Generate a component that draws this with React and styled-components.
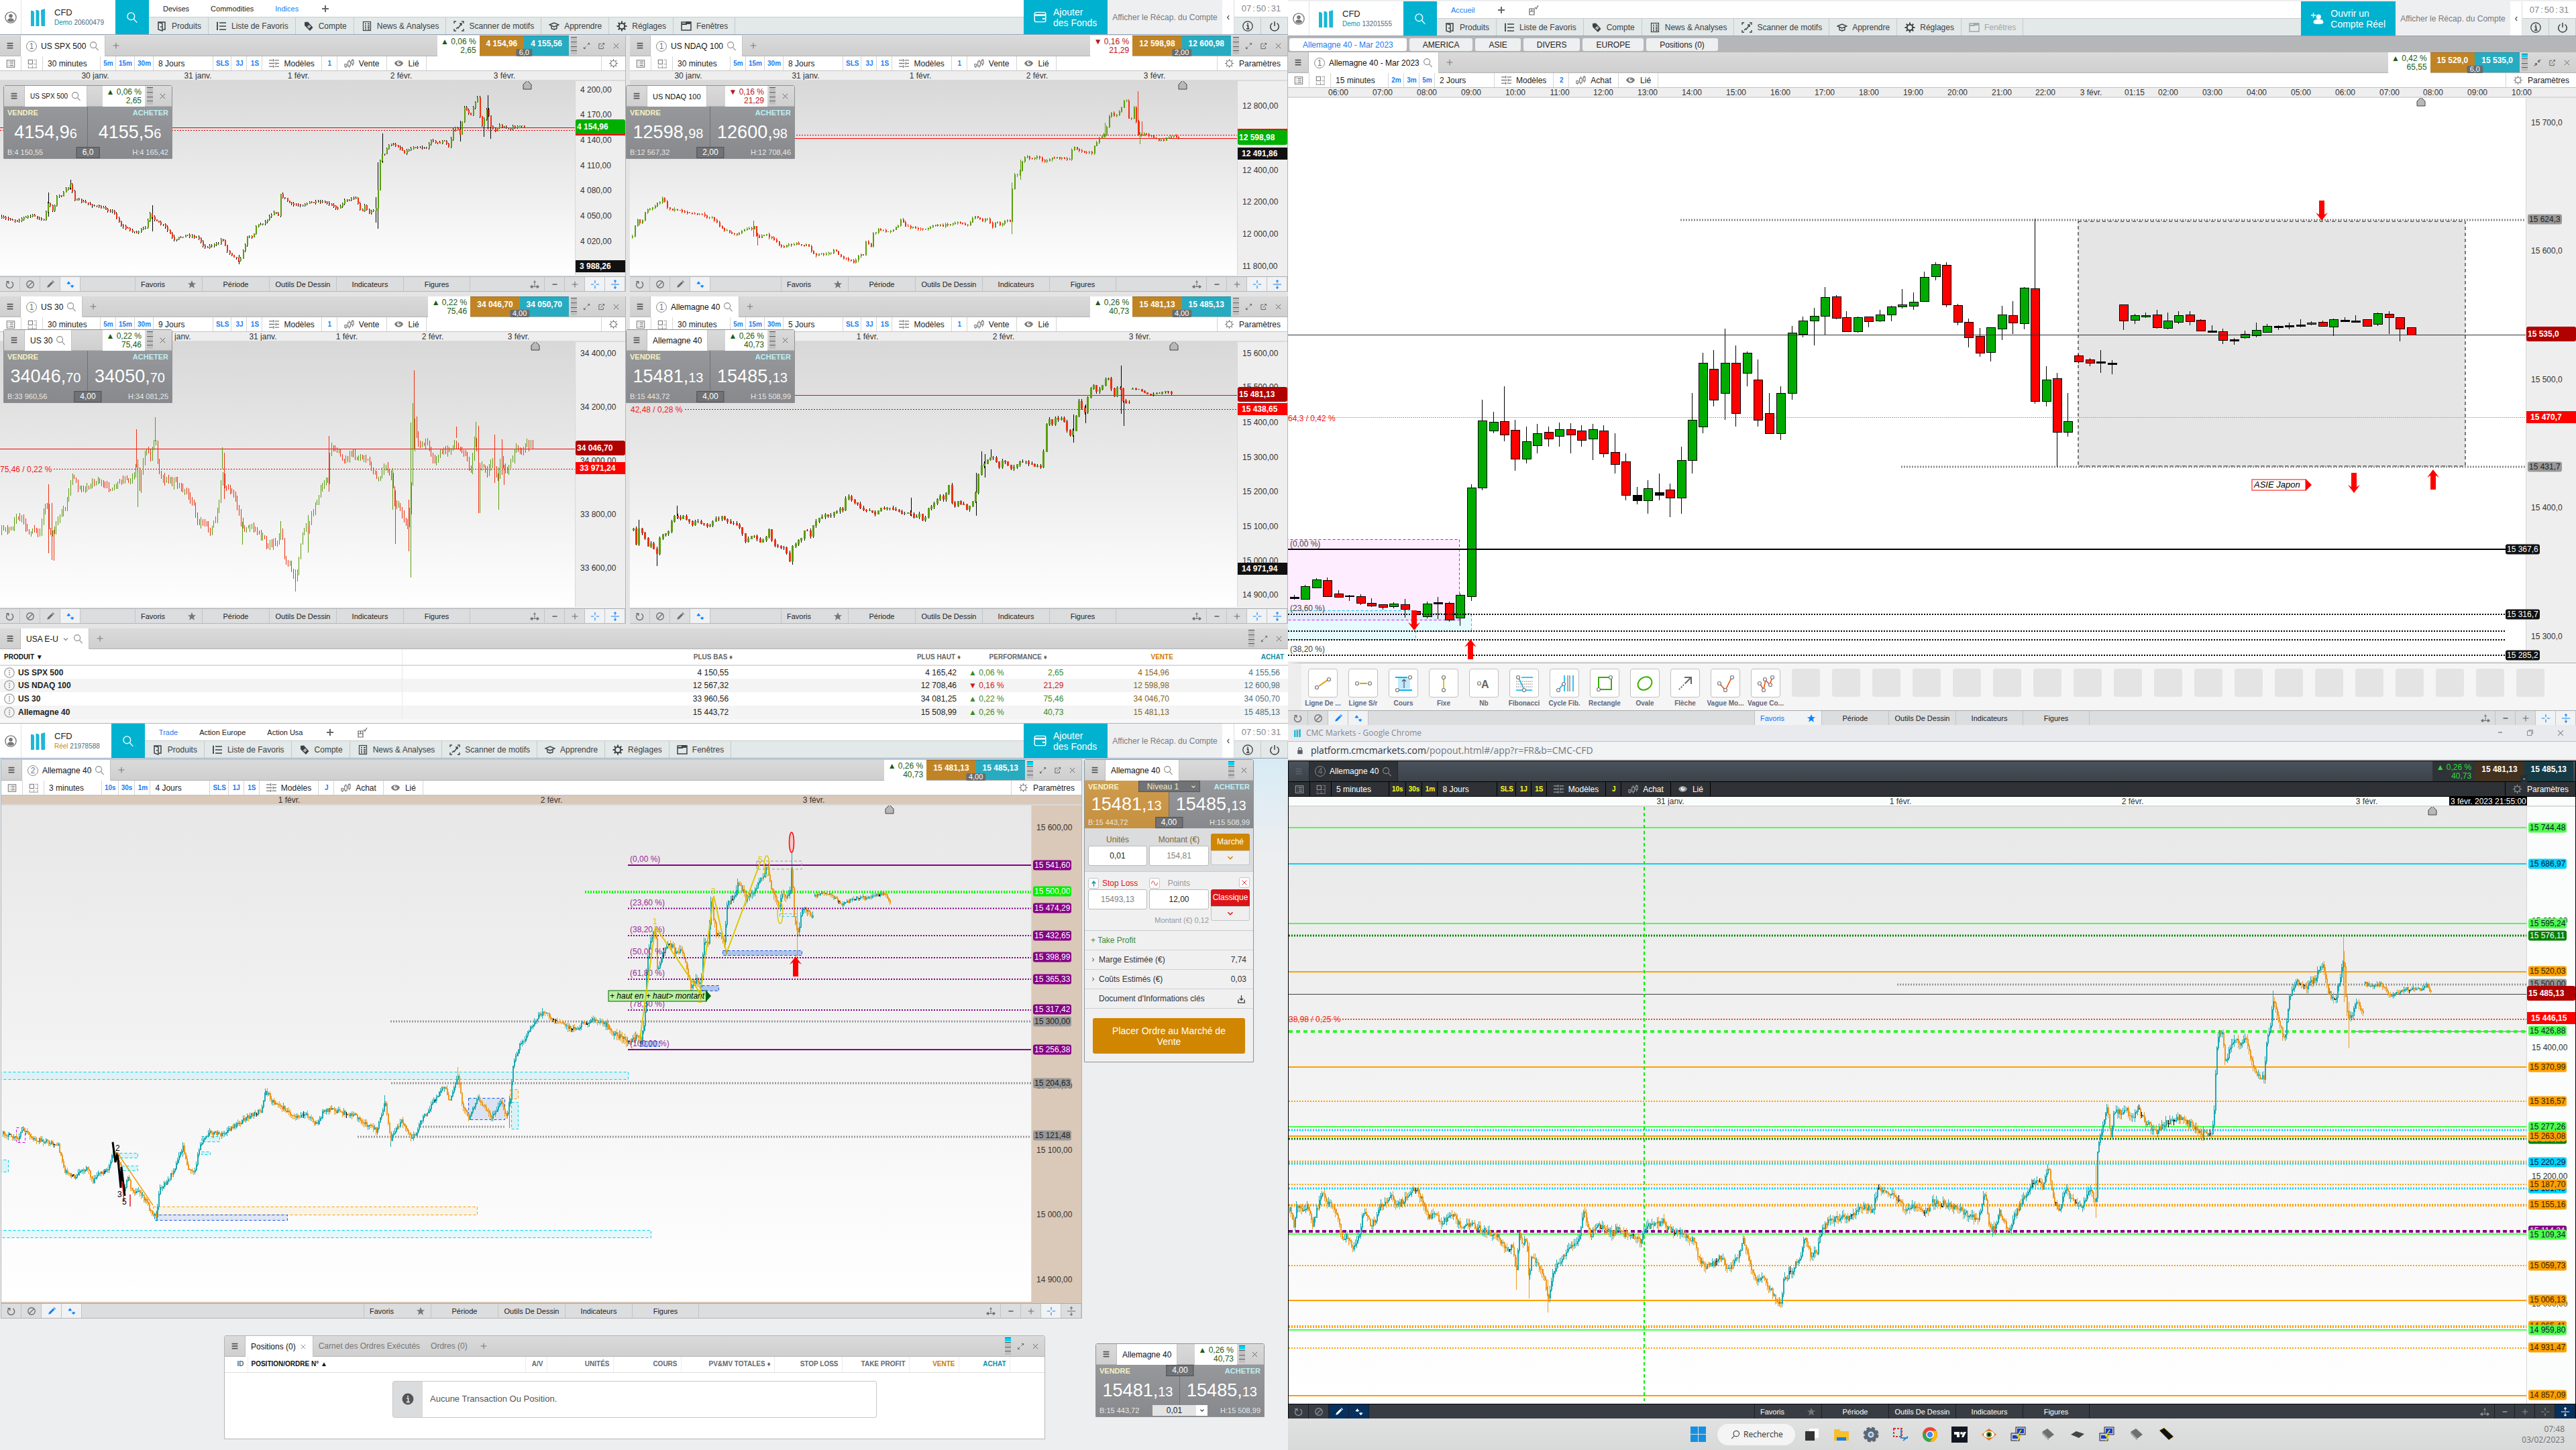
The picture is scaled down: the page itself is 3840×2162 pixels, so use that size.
import styled, { createGlobalStyle } from "styled-components";

const GlobalStyle = createGlobalStyle`
    * { box-sizing: border-box; }
    body {
        margin: 0;
        background: #eceef0;
        color: #222;
        font-family: "Liberation Sans", Arial, sans-serif;
        font-size: 12px;
        line-height: 14px;
    }
    button, input, select {
        font: inherit;
        color: inherit;
        margin: 0;
        padding: 0;
        border: 0;
        border-radius: 0;
        background: none;
    }
    svg { display: block; flex: none; }
    table { border-collapse: collapse; }
`;

/* ---------- icons, 16x16 grid ---------- */

const ICONS = {
    burger: <path d="M3 4h10M3 8h10M3 12h10" strokeWidth="2" />,
    user: <g><circle cx="8" cy="8" r="7.2" strokeWidth="1.2" /><circle cx="8" cy="6" r="2.5" fill="currentColor" stroke="none" /><path d="M3.5 12c.6-2.300 2.200-3 4.500-3s3.900.7 4.500 3a6 6 0 0 1-9 0z" fill="currentColor" stroke="none" /></g>,
    search: <g><circle cx="6.500" cy="6.500" r="4.800" /><path d="M10 10l4.500 5" /></g>,
    plus: <path d="M8 3v10M3 8h10" />,
    boldPlus: <path d="M8 3v10M3 8h10" strokeWidth="2" />,
    minus: <path d="M4 8h8" strokeWidth="2" />,
    close: <path d="M3.500 3.500l9 9M12.500 3.500l-9 9" />,
    expand: <path d="M9 7l4-4M10 3h3v3M7 9l-4 4M3 10v3h3" />,
    shrink: <path d="M14 2L9.500 6.500M9.500 3.500v3h3M2 14l4.500-4.500M3.500 9.500h3v3" strokeWidth="1.600" />,
    popout: <path d="M8 4H3.500v9h8V9M7 9.500L13 3M10 3h3v3" />,
    products: <path d="M3 2h10v11h-3M3 2l6 2v11l-6-2zM7 8v2" strokeWidth="1.500" />,
    list: <path d="M5 3h10M5 8h10M5 13h10M1 2.500h2M1 7.500h2M1 12.500h2M2 2v12" strokeWidth="1.700" />,
    tag: <g fill="currentColor" stroke="none"><path d="M2 2l5-.5L14.500 10 10 15 2 7z" /><path d="M6.500 9.500l3-3M8 11l3-3" stroke="#fff" /></g>,
    news: <g><rect x="2.500" y="1.500" width="11" height="13" /><path d="M5 4.500h2M9 4.500h3M5 7.500h2M9 7.500h3M5 10h2M9 10h3M5 12.500h2M9 12.500h3" strokeWidth="1.400" /></g>,
    scan: <path d="M1 4V1h3M12 1h3v3M15 12v3h-3M4 15H1v-3M4 12l2-2 1 1 5-7M9 4h3v3" strokeWidth="1.400" />,
    cap: <path d="M1 6l7-3 7 3-7 3zM4 7.500V11c0 2 8 2 8 0V7.500M7 13h2" strokeWidth="1.400" />,
    gear: <g><circle cx="8" cy="8" r="4.200" strokeWidth="2" /><path d="M8 .5v3M8 12.500v3M.5 8h3M12.500 8h3M2.700 2.700l2 2M11.300 11.300l2 2M13.300 2.700l-2 2M4.700 11.300l-2 2" strokeWidth="2" /></g>,
    gearThin: <g><circle cx="8" cy="8" r="4.300" /><path d="M8 1v2.700M8 12.300V15M1 8h2.700M12.300 8H15M3 3l2 2M11 11l2 2M13 3l-2 2M5 11l-2 2" /></g>,
    window: <g><rect x="1" y="2" width="14" height="12" strokeWidth="1.500" /><path d="M1 5h7V2h7M9 4h5" strokeWidth="2" /></g>,
    wallet: <g><rect x="1" y="2" width="14" height="12" rx="2" /><path d="M1 5.500h14M11 10h3" strokeWidth="2" /></g>,
    addUser: <g fill="currentColor" stroke="none"><circle cx="9.500" cy="6" r="3" /><path d="M3 13c0-3 2.500-4 6.500-4s6 1 6 4-12.500 3-12.500 0z" /><path d="M3 1v6M0 4h6" stroke="currentColor" /></g>,
    left: <path d="M10 3L6 8l4 5" strokeWidth="2" />,
    right: <path d="M5 3l4 5-4 5" strokeWidth="2" />,
    down: <path d="M4 6l4 4 4-4" strokeWidth="1.800" />,
    info: <g><circle cx="8" cy="8" r="7.200" /><path d="M6.500 7H8.500v5M6 12h4.500M8 3.500v2" strokeWidth="1.600" /></g>,
    infoSolid: <g><circle cx="8" cy="8" r="7.500" fill="currentColor" stroke="none" /><path d="M6.500 7H8.500v5M6 12h4.500M8 3.500v2" stroke="#ddd" strokeWidth="1.600" /></g>,
    power: <path d="M4.500 3.500a6.300 6.300 0 1 0 7 0M8 1v7" strokeWidth="1.400" />,
    page: <g><rect x="1.500" y="2" width="13" height="12" /><path d="M4 5h1M6.500 5h6M4 8h1M6.500 8h6M4 11h1M6.500 11h6" /></g>,
    grid: <g><rect x="1.500" y="1.500" width="7" height="7" /><path d="M11 1.500h4M11 8.500h4M1.500 11v4M8.500 11v4M15 1v14M1 15h14" strokeDasharray="1.500 1" /></g>,
    sliders: <path d="M0 3h6M9 3h7M7 1v4M0 8h9M12 8h4M11 6v4M0 13h6M9 13h7M7 11v4" strokeWidth="1.400" />,
    candles: <path d="M1 9h3v4H1zM2.500 13v2M6 5h4v7H6zM8 2v3M8 12v3M12 3h3v6h-3zM13.500 1v2M13.500 9v3" />,
    eye: <g><path d="M1 8c3-6 11-6 14 0-3 6-11 6-14 0z" fill="currentColor" stroke="none" /><circle cx="8" cy="7.500" r="3" fill="#eee" stroke="none" /><circle cx="9" cy="6.500" r="1.500" fill="currentColor" stroke="none" /></g>,
    refresh: <path d="M4.500 3.500a5.800 5.800 0 1 0 6 0M1.500 3h4v4" strokeWidth="1.600" />,
    ban: <g><circle cx="8" cy="8" r="6" strokeWidth="1.500" /><path d="M4 12l8-8" strokeWidth="1.500" /></g>,
    pencil: <path d="M2.500 13.500l1-3.500 7-7 2.500 2.500-7 7zM11 2l1-1 3 3-1 1z" fill="currentColor" stroke="none" />,
    updown: <g fill="currentColor" stroke="none"><path d="M1.500 7L5 2.500 8.500 7zM7.500 10L11 14l3.500-4z" /><path d="M4 7h2M10 9.500h2" stroke="currentColor" /></g>,
    star: <path d="M8 1l2 5h5l-4 3.200 1.500 5.300L8 11.500l-4.500 3L5 9.200 1 6h5z" fill="currentColor" stroke="none" />,
    spread: <path d="M8 1.500v5M6 4h4M1 12h14M4 9.500v5M12 9.500v5M8 7v4M3 10l-2 2 2 2M13 10l2 2-2 2" strokeWidth="1.300" />,
    cross: <path d="M8 1v5M8 10v5M1 8h5M10 8h5" strokeWidth="1.300" />,
    stretch: <path d="M8 1v5M6 3l2-2 2 2M1 8h14M8 10v5M6 13l2 2 2-2" strokeWidth="1.300" />,
    lock: <g fill="currentColor" stroke="none"><rect x="3" y="7" width="10" height="8" rx="1" /><path d="M5 7V5a3 3 0 0 1 6 0v2" fill="none" stroke="currentColor" strokeWidth="1.600" /></g>,
    download: <path d="M3 9v5h10V9M8 2v8M5 7l3 3 3-3" strokeWidth="1.300" />,
    mouse: <path d="M2 6h7v9H2zM2 10h7M5.500 6v4M10 4l2 2 3-5" />,
    upArrow: <path d="M8 14V4M4 8l4-5 4 5" strokeWidth="2" />,
    wave: <path d="M2 9c2-7 4-7 6-1s4 6 6-1" />,
    max: <path d="M3 5h8v8H3zM6 5V3h7v7h-2" />,
    dots: <g><circle cx="8" cy="8" r="7.200" /><path d="M8 4v2M8 7v2M8 10v2" strokeWidth="1.600" /></g>,
};

function Icon({ name, size = 14 }) {
    return (
        <svg width={size} height={size} viewBox="0 0 16 16" fill="none" stroke="currentColor" strokeWidth="1.200" aria-hidden="true">
            {ICONS[name]}
        </svg>
    );
}

function Logo({ width = 21, height = 26 }) {
    return (
        <svg width={width} height={height} viewBox="0 0 21 26" fill="#1bb7d9" aria-hidden="true">
            <path d="M0 3q3-1 5 2v21H0zM7.500 2q3-1 5 2v22h-5zM15 2l6-2v26h-5.500z" />
        </svg>
    );
}

/* ---------- platform header ---------- */

const Header = styled.header`
    display: flex;
    height: 52px;
    background: #fff;
    border-bottom: 1px solid #93a0b5;
    margin-top: ${(p) => p.$top || 0}px;
`;

const UserCell = styled.button`
    width: 32px;
    display: flex;
    align-items: center;
    justify-content: center;
    border-right: 1px solid #e2e2e2;
    color: #777;
`;

const Brand = styled.div`
    display: flex;
    align-items: center;
    gap: 14px;
    padding: 0 17px 0 14px;
`;

const BrandName = styled.div`
    font-size: 13px;
    line-height: 16px;
    color: #222;
`;

const Account = styled.div`
    font-size: 10px;
    color: #4d6b80;
    white-space: nowrap;
    span { color: ${(p) => (p.$live ? "#c98a1c" : "#128fa5")}; }
`;

const SearchButton = styled.button`
    width: 50px;
    background: #00b2d0;
    color: #fff;
    display: flex;
    align-items: center;
    justify-content: center;
    cursor: pointer;
`;

const HeaderMain = styled.div`
    flex: 1;
    display: flex;
    flex-direction: column;
`;

const Layouts = styled.div`
    height: 25px;
    display: flex;
    align-items: center;
    gap: 32px;
    padding-left: 21px;
    font-size: 11px;
    color: #666;
`;

const LayoutTab = styled.button`
    color: ${(p) => (p.$active ? "#1a7cf0" : "#222")};
`;

const Nav = styled.nav`
    flex: 1;
    display: flex;
    background: #e3e8e8;
    border-top: 1px solid #c9cccc;
`;

const NavButton = styled.button`
    display: flex;
    align-items: center;
    gap: 7px;
    padding: 0 10px 0 11px;
    border-right: 1px solid #c5caca;
    color: ${(p) => (p.disabled ? "#a2a7a9" : "#3c4144")};
    white-space: nowrap;
`;

const FundsButton = styled.button`
    min-width: 125px;
    background: #00b2d0;
    color: #fff;
    font-size: 14px;
    line-height: 16px;
    text-align: left;
    display: flex;
    align-items: center;
    gap: 10px;
    padding: 0 15px;
    white-space: pre-line;
`;

const Summary = styled.button`
    width: 171px;
    background: #eeeff1;
    color: #787b7e;
    white-space: nowrap;
`;

const Collapse = styled.button`
    width: 18px;
    border-right: 1px solid #ddd;
    color: #555;
    display: flex;
    align-items: center;
    justify-content: center;
`;

const Status = styled.div`
    width: 80px;
    display: grid;
    grid-template-rows: 25px 1fr;
    grid-template-columns: 1fr 1fr;
`;

const Clock = styled.div`
    grid-column: 1 / 3;
    display: flex;
    align-items: center;
    justify-content: center;
    font-size: 13px;
    color: #85898c;
    span { padding: 0 2px; }
`;

const StatusButton = styled.button`
    background: #e3e8e8;
    border-top: 1px solid #c9cccc;
    border-right: 1px solid #c5caca;
    color: #333;
    display: flex;
    align-items: center;
    justify-content: center;
`;

const NAV = [
    ["products", "Produits"],
    ["list", "Liste de Favoris"],
    ["tag", "Compte"],
    ["news", "News & Analyses"],
    ["scan", "Scanner de motifs"],
    ["cap", "Apprendre"],
    ["gear", "Réglages"],
    ["window", "Fenêtres"],
];

function PlatformHeader({ kind, number, tabs, active, mouse, cta, ctaIcon = "wallet", top, noWindows }) {
    return (
        <Header $top={top}>
            <UserCell aria-label="Profil"><Icon name="user" size={18} /></UserCell>
            <Brand>
                <Logo />
                <div>
                    <BrandName>CFD</BrandName>
                    <Account $live={kind === "Réel"}><span>{kind}</span> {number}</Account>
                </div>
            </Brand>
            <SearchButton aria-label="Rechercher"><Icon name="search" size={18} /></SearchButton>
            <HeaderMain>
                <Layouts>
                    {tabs.map((t) => <LayoutTab key={t} $active={t === active}>{t}</LayoutTab>)}
                    <Icon name="boldPlus" size={16} />
                    {mouse && <Icon name="mouse" size={16} />}
                </Layouts>
                <Nav>
                    {NAV.map(([icon, label]) => (
                        <NavButton key={label} disabled={noWindows && icon === "window"}>
                            <Icon name={icon} size={16} />{label}
                        </NavButton>
                    ))}
                </Nav>
            </HeaderMain>
            <FundsButton><Icon name={ctaIcon} size={19} />{cta}</FundsButton>
            <Summary>Afficher le Récap. du Compte</Summary>
            <Collapse aria-label="Réduire"><Icon name="left" size={10} /></Collapse>
            <Status>
                <Clock>07<span>:</span>50<span>:</span>31</Clock>
                <StatusButton aria-label="Aide"><Icon name="info" size={16} /></StatusButton>
                <StatusButton aria-label="Quitter"><Icon name="power" size={16} /></StatusButton>
            </Status>
        </Header>
    );
}

/* ---------- window chrome ---------- */

const Win = styled.section`
    position: relative;
    min-width: 0;
    display: flex;
    flex-direction: column;
    background: #fff;
    border: 0 solid ${(p) => (p.$dark ? "#000" : "#b5b5b5")};
    border-width: ${(p) => p.$border || "0 1px 1px 0"};
`;

const TitleBar = styled.div`
    display: flex;
    height: 31px;
    padding-right: 3px;
    border-bottom: 1px solid ${(p) => (p.$dark ? "#000" : "#b4b4b4")};
    background: ${(p) => (p.$dark ? "linear-gradient(#4a525c, #3b4249)" : "linear-gradient(#dadada, #cfcfcf)")};
    color: ${(p) => (p.$dark ? "#8d9296" : "#777")};
`;

const Burger = styled.button`
    width: 31px;
    display: flex;
    align-items: center;
    justify-content: center;
    border-right: 1px solid ${(p) => (p.$dark ? "#23262a" : "#bdbdbd")};
    color: ${(p) => (p.$dark ? "#5b6167" : "#555")};
`;

const SymbolTab = styled.button`
    display: flex;
    align-items: center;
    gap: 5px;
    padding: 0 8px;
    height: ${(p) => (p.$dark ? 30 : 31)}px;
    background: ${(p) => (p.$dark ? "#2f3338" : "#fff")};
    border-right: 1px solid ${(p) => (p.$dark ? "#23262a" : "#c4c4c4")};
    font-size: ${(p) => p.$size || 12}px;
    white-space: nowrap;
    svg { color: #8b8b8b; }
`;

const SymbolName = styled.span`
    color: ${(p) => (p.$dark ? "#fff" : "#111")};
`;

const Round = styled.span`
    width: 16px;
    height: 16px;
    border: 1px solid #8b8b8b;
    border-radius: 50%;
    color: #777;
    text-align: center;
    margin-right: 1px;
`;

const AddTab = styled.button`
    width: 32px;
    display: flex;
    align-items: center;
    justify-content: center;
`;

const Spacer = styled.div`
    flex: 1;
`;

const ChangeCell = styled.div`
    width: 63px;
    height: ${(p) => (p.$dark ? 30 : 31)}px;
    padding: 3px 5px 0 0;
    line-height: 13px;
    text-align: right;
    background: ${(p) => (p.$dark ? "#2f3338" : "#fff")};
    color: ${(p) => (p.$dark ? "#2bdc3a" : p.$up ? "#1d5c12" : "#b51520")};
`;

const Quotes = styled.div`
    position: relative;
    display: flex;
`;

const Quote = styled.button`
    height: 30px;
    padding: 0 10px 8px;
    font-weight: bold;
    color: #fff;
    background: ${(p) => p.$bg};
    border-top: 1px solid rgba(0, 0, 0, 0.15);
`;

const QuoteSpread = styled.span`
    position: absolute;
    left: 50%;
    bottom: -1px;
    transform: translateX(-50%);
    padding: 0 4px;
    font-size: 11px;
    line-height: 11px;
    border-radius: 2px;
    background: ${(p) => (p.$dark ? "#22303a" : "#6a6c6e")};
    color: #fff;
`;

const MeterBox = styled.div`
    width: 15px;
    padding: 2px 3px;
    display: flex;
    flex-direction: column;
    gap: 1px;
    div {
        height: 6px;
        border-top: 1px solid #555;
        background: #bfbfbf;
    }
    div:first-child { background: ${(p) => (p.$on ? "#00d5f5" : "#bfbfbf")}; }
`;

const WinButton = styled.button`
    width: 22px;
    display: flex;
    align-items: center;
    justify-content: center;
    color: #666;
`;

function Meter({ on }) {
    return <MeterBox $on={on}><div /><div /><div /><div /></MeterBox>;
}

function Change({ up, pct, pts, dark }) {
    return (
        <ChangeCell $up={up} $dark={dark}>
            {up ? "▲" : "▼"} {pct}<br />{pts}
        </ChangeCell>
    );
}

const Toolbar = styled.div`
    display: flex;
    height: 22px;
    background: ${(p) => (p.$dark ? "#2e3236" : "#fff")};
    border-bottom: 1px solid ${(p) => (p.$dark ? "#000" : "#c4c4c4")};
    color: ${(p) => (p.$dark ? "#fff" : "#222")};
    button { border-right: 1px solid ${(p) => (p.$dark ? "#000" : "#d5d5d5")}; }
    svg { color: ${(p) => (p.$dark ? "#9a9fa3" : "#777")}; }
`;

const ToolIcon = styled.button`
    width: 32px;
    display: flex;
    align-items: center;
    justify-content: center;
`;

const ToolSelect = styled.button`
    width: ${(p) => p.$w}px;
    padding-left: 7px;
    text-align: left;
`;

const ToolQuick = styled.button`
    min-width: 23px;
    padding: 1px 3px 0 4px;
    font-size: 10px;
    font-weight: bold;
    color: ${(p) => (p.$dark ? "#ffff22" : "#1a7cf0")};
`;

const ToolItem = styled.button`
    display: flex;
    align-items: center;
    gap: 7px;
    padding: 0 10px;
    white-space: nowrap;
`;

const ToolEnd = styled(ToolItem)`
    && {
        border-right: 0;
        border-left: 1px solid ${(p) => (p.$dark ? "#000" : "#d5d5d5")};
    }
`;

const FootBar = styled.div`
    display: flex;
    height: 22px;
    border-top: 1px solid ${(p) => (p.$dark ? "#000" : "#a9abad")};
    background: ${(p) => (p.$dark ? "#383d43" : "#dcdddf")};
    color: ${(p) => (p.$dark ? "#fff" : "#222")};
    font-size: 11px;
`;

const FootIcon = styled.button`
    width: 30px;
    display: flex;
    align-items: center;
    justify-content: center;
    border-right: 1px solid ${(p) => (p.$dark ? "#1c1f22" : "#c3c4c6")};
    background: ${(p) => (p.$on ? (p.$dark ? "#06305e" : "#f1f2f4") : "none")};
    color: ${(p) => (p.$dark ? (p.$on ? "#fff" : "#8b9095") : p.$on ? "#0a84ff" : "#6d6d6d")};
`;

const FootTab = styled.button`
    width: 100px;
    display: flex;
    align-items: center;
    justify-content: ${(p) => (p.$star ? "space-between" : "center")};
    padding: 0 8px;
    white-space: nowrap;
    border-left: 1px solid ${(p) => (p.$dark ? "#1c1f22" : "#c3c4c6")};
    background: ${(p) => (p.$on ? "#f1f2f4" : "none")};
    color: ${(p) => (p.$on ? "#0a6eff" : "inherit")};
    svg { color: ${(p) => (p.$on ? "#0a84ff" : "#777")}; }
    &:last-child { border-right: 1px solid ${(p) => (p.$dark ? "#1c1f22" : "#c3c4c6")}; }
`;

const FootTabs = styled.div`
    display: flex;
    flex: 1;
    justify-content: center;
`;

function FooterBar({ dark, active, favorite }) {
    const left = ["refresh", "ban", "pencil", "updown"];
    const right = ["spread", "minus", "plus", "cross", "stretch"];
    return (
        <FootBar $dark={dark}>
            {left.map((n) => (
                <FootIcon key={n} $dark={dark} $on={active.includes(n)} aria-label={n}><Icon name={n} /></FootIcon>
            ))}
            <FootTabs>
                <FootTab $star $dark={dark} $on={favorite}>Favoris<Icon name="star" /></FootTab>
                <FootTab $dark={dark}>Période</FootTab>
                <FootTab $dark={dark}>Outils De Dessin</FootTab>
                <FootTab $dark={dark}>Indicateurs</FootTab>
                <FootTab $dark={dark}>Figures</FootTab>
            </FootTabs>
            {right.map((n) => (
                <FootIcon key={n} $dark={dark} $on={active.includes(n)} aria-label={n}><Icon name={n} /></FootIcon>
            ))}
        </FootBar>
    );
}

/* ---------- charts ---------- */

const ChartGrid = styled.div`
    display: grid;
    grid-template-columns: minmax(0, 1fr) ${(p) => p.$axis}px;
    grid-template-rows: 15px auto;
    background: ${(p) => p.$tone};
    padding-bottom: ${(p) => p.$pad}px;
`;

const TimeAxis = styled.svg`
    grid-column: 1 / 3;
    width: 100%;
    height: 15px;
    border-bottom: 2px solid #dadada;
`;

const Plot = styled.svg`
    width: 100%;
    height: ${(p) => p.$h}px;
    background: linear-gradient(${(p) => p.$from}, #fff);
    border-right: 1px solid #d8d8d8;
`;

const PriceAxis = styled.svg`
    width: 100%;
    height: ${(p) => p.$h}px;
    overflow: visible;
`;

function makeBars(points, step, vol, seed) {
    let state = seed;
    const rnd = () => {
        state = (state * 16807) % 2147483647;
        return state / 2147483647;
    };
    const bars = [];
    let k = 0;
    let prev = points[1];
    const lastX = points[points.length - 2];
    for (let x = points[0]; x <= lastX; x += step) {
        while (k < points.length - 4 && points[k + 2] < x) k += 2;
        const [x0, y0, x1, y1] = points.slice(k, k + 4);
        const t = Math.min(1, Math.max(0, (x - x0) / (x1 - x0)));
        const close = y0 + (y1 - y0) * t + (rnd() - 0.5) * vol;
        bars.push({
            x,
            open: prev,
            close,
            high: Math.min(prev, close) - rnd() * vol * 0.8,
            low: Math.max(prev, close) + rnd() * vol * 0.8,
        });
        prev = close;
    }
    return bars;
}

function Series({ points, spikes = [], map, step, vol, seed = 7, up, down, flat, wick, body = 2 }) {
    const [kx, ox, ky, oy] = map;
    const px = (x) => Math.round(x / kx + ox) + 0.5;
    const py = (y) => Math.round(y / ky + oy);
    const d = { wu: "", wd: "", wf: "", bu: "", bd: "", bf: "" };
    makeBars(points, step * kx, vol * ky, seed).forEach((b) => {
        const still = flat && Math.abs(b.close - b.open) < ky * 0.2;
        const side = still ? "f" : b.close <= b.open ? "u" : "d";
        d["w" + side] += `M${px(b.x)} ${py(b.high)}V${py(b.low) + 1}`;
        if (body) d["b" + side] += `M${px(b.x)} ${py(Math.min(b.open, b.close))}V${py(Math.max(b.open, b.close)) + 1}`;
    });
    for (let i = 0; i < spikes.length; i += 4) {
        d[spikes[i + 3] ? "wu" : "wd"] += `M${px(spikes[i])} ${py(spikes[i + 1])}V${py(spikes[i + 2])}`;
    }
    return (
        <g fill="none" shapeRendering="crispEdges">
            <path d={d.wu} stroke={wick || up} />
            <path d={d.wd} stroke={wick || down} />
            <path d={d.bu} stroke={up} strokeWidth={body} />
            <path d={d.bd} stroke={down} strokeWidth={body} />
            <path d={d.wf} stroke={flat} />
            <path d={d.bf} stroke={flat} strokeWidth={body} />
        </g>
    );
}

function HLine({ y, x = 0, to = "100%", color, w = 1, dash }) {
    return <line x1={x} x2={to} y1={y} y2={y} stroke={color} strokeWidth={w} strokeDasharray={dash} />;
}

function Box({ x, y, w, h, fill, stroke, opacity = 0.12 }) {
    return (
        <rect x={x + 0.5} y={Math.floor(y) + 0.5} width={w} height={h} fill={fill || stroke} fillOpacity={opacity} stroke={stroke} strokeDasharray="4 3" />
    );
}

function Arrow({ x, y, up, tall = 31 }) {
    const s = up ? 1 : -1;
    return <path d={`M${x} ${y}l9 ${s * 12}l-5 ${-s * 3}v${s * (tall - 9)}h-8v${-s * (tall - 9)}l-5 ${s * 3}z`} fill="#f00" />;
}

const TAG = {
    green: ["#00b000", "#fff"],
    red: ["#f00", "#fff"],
    dark: ["#b00000", "#fff"],
    black: ["#111", "#fff"],
    gray: ["#989898", "#222"],
    purple: ["#850085", "#fff"],
    lime: ["#00f000", "#fff"],
    mint: ["#4dff4d", "#113"],
    cyan: ["#00d4ff", "#113"],
    orange: ["#ffa000", "#332200"],
    forest: ["#008000", "#fff"],
};

// shapes: "big" is the live price, "bar" a full-width strip, "pill" a drawn level
function PriceTag({ y, text, tone, shape, x = 0 }) {
    if (!tone) return <text x="7" y={y + 4} fill="#333">{text}</text>;
    const [bg, fg] = TAG[tone];
    const h = shape === "big" ? 22 : shape === "bar" ? 18 : 15;
    const full = shape === "big" || shape === "bar";
    return (
        <g>
            <rect x={full ? 0 : x + 2} y={y - h / 2} width={full ? "100%" : text.length * 6 + 3} height={h} rx={shape === "bar" ? 0 : 3} fill={bg} />
            <text x={full ? (shape === "big" ? 2 : 6) : x + 4} y={y + 4} fill={fg} fontWeight={full ? "bold" : "normal"}>{text}</text>
        </g>
    );
}

function Chart({ height, dates, prices, marker, from = "#d8d8d8", tone = "#eee", axis = 74, pad = 2, timeExtra, children }) {
    return (
        <ChartGrid $tone={tone} $axis={axis} $pad={pad}>
            <TimeAxis>
                {dates.map(([x, label]) => (
                    <text key={x} x={x} y="11" textAnchor="middle" fill="#333">{label}</text>
                ))}
                {timeExtra}
            </TimeAxis>
            <Plot $h={height} $from={from}>
                {children}
                <path d={`M${marker - 6} 12V5l6-6 6 6v7z`} fill="#b8b8b8" stroke="#444" />
            </Plot>
            <PriceAxis $h={height}>
                {prices.map((p, i) => <PriceTag key={i} y={p[0]} text={p[1]} tone={p[2]} shape={p[3]} x={p[4]} />)}
            </PriceAxis>
        </ChartGrid>
    );
}

function ChartWindow({ num, name, change, sell, buy, spread, meter, shrink, noPlus, dark, border, interval, quick, range, ranges, model, side, noLabel, active, favorite, palette, ticket, children }) {
    return (
        <Win $border={border} $dark={dark}>
            <TitleBar $dark={dark}>
                <Burger $dark={dark} aria-label="Menu"><Icon name="burger" /></Burger>
                <SymbolTab $dark={dark}>
                    <Round>{num}</Round>
                    <SymbolName $dark={dark}>{name}</SymbolName>
                    <Icon name="search" size={15} />
                </SymbolTab>
                {!noPlus && <AddTab aria-label="Ajouter"><Icon name="plus" /></AddTab>}
                <Spacer />
                <Change {...change} dark={dark} />
                <Quotes>
                    <Quote $bg={dark ? "#42311f" : "#c08425"}>{sell}</Quote>
                    <Quote $bg={dark ? "#163b45" : "#27abc0"}>{buy}</Quote>
                    <QuoteSpread $dark={dark}>{spread}</QuoteSpread>
                </Quotes>
                {!dark && <Meter on={meter} />}
                {!dark && <WinButton aria-label="Agrandir"><Icon name={shrink ? "shrink" : "expand"} size={13} /></WinButton>}
                {!dark && <WinButton aria-label="Détacher"><Icon name="popout" size={13} /></WinButton>}
                {!dark && <WinButton aria-label="Fermer"><Icon name="close" size={13} /></WinButton>}
            </TitleBar>
            <Toolbar $dark={dark}>
                <ToolIcon aria-label="Liste"><Icon name="page" /></ToolIcon>
                <ToolIcon aria-label="Grille"><Icon name="grid" /></ToolIcon>
                <ToolSelect $w={86}>{interval}</ToolSelect>
                {quick.map((q) => <ToolQuick key={q} $dark={dark}>{q}</ToolQuick>)}
                <ToolSelect $w={89}>{range}</ToolSelect>
                {ranges.map((q) => <ToolQuick key={q} $dark={dark}>{q}</ToolQuick>)}
                <ToolItem><Icon name="sliders" size={15} />Modèles</ToolItem>
                <ToolQuick $dark={dark}>{model}</ToolQuick>
                <ToolItem><Icon name="candles" size={15} />{side}</ToolItem>
                <ToolItem><Icon name="eye" size={15} />Lié</ToolItem>
                <Spacer />
                <ToolEnd $dark={dark} aria-label="Paramètres"><Icon name="gearThin" size={15} />{!noLabel && "Paramètres"}</ToolEnd>
            </Toolbar>
            {children}
            {palette}
            <FooterBar dark={dark} active={active} favorite={favorite} />
            {ticket}
        </Win>
    );
}

/* ---------- quote ticket ---------- */

const TicketBox = styled.section`
    width: 252px;
    border-radius: 3px 3px 0 0;
    border: 1px solid #8f9194;
    background: #f0f0f1;
`;

const FloatingTicket = styled.div`
    position: absolute;
    left: ${(p) => p.$left}px;
    top: ${(p) => p.$top}px;
`;

const TicketPrices = styled.div`
    position: relative;
    display: grid;
    grid-template-columns: 1fr 1fr;
    height: ${(p) => p.$h || 77}px;
`;

const Side = styled.button`
    display: flex;
    flex-direction: column;
    justify-content: space-between;
    align-items: stretch;
    padding: 2px 5px 2px;
    font-size: 11px;
    text-align: ${(p) => (p.$buy ? "right" : "left")};
    background: ${(p) => (p.$hot ? "linear-gradient(#cf9b4d, #c59040)" : "linear-gradient(#96989b, #87898c)")};
    color: #e8e8e8;
    border-right: ${(p) => (p.$buy ? 0 : 1)}px solid #6e7072;
    strong { color: ${(p) => (p.$buy ? "#bdf0f4" : "#f6f1c2")}; }
`;

const Big = styled.span`
    font-size: 27px;
    line-height: 28px;
    color: #fff;
    text-align: center;
    small { font-size: 20px; }
`;

const SpreadBox = styled.span`
    position: absolute;
    left: 50%;
    ${(p) => (p.$top ? "top: 0;" : "bottom: 0;")}
    transform: translateX(-50%);
    padding: 0 8px;
    line-height: 15px;
    border: 1px solid #505255;
    background: #707275;
    color: #fff;
`;

const Lots = styled.label`
    position: absolute;
    left: 50%;
    bottom: 1px;
    transform: translateX(-50%);
    display: flex;
    input {
        width: 65px;
        height: 16px;
        background: #e3e3e3;
        color: #222;
        text-align: center;
    }
    span {
        width: 17px;
        background: #fff;
        color: #333;
        display: flex;
        align-items: center;
        justify-content: center;
    }
`;

const Level = styled.label`
    position: absolute;
    top: 0;
    left: 50%;
    transform: translateX(-50%);
    display: flex;
    align-items: center;
    height: 17px;
    border: 1px solid #55575a;
    background: #707275;
    color: #f0eac0;
    select {
        appearance: none;
        width: 72px;
        text-align: center;
    }
    svg { margin: 0 4px; }
`;

function TicketTitle({ name, size, search = true, change, meter }) {
    return (
        <TitleBar>
            <Burger aria-label="Menu"><Icon name="burger" /></Burger>
            <SymbolTab $size={size}>
                <SymbolName>{name}</SymbolName>
                {search && <Icon name="search" size={15} />}
            </SymbolTab>
            <Spacer />
            {change && <Change {...change} />}
            <Meter on={meter} />
            <WinButton aria-label="Fermer"><Icon name="close" size={13} /></WinButton>
        </TitleBar>
    );
}

function PricePair({ sell, buy, low, high, spread, hot, height, spreadTop, children }) {
    return (
        <TicketPrices $h={height}>
            <Side $hot={hot}>
                <strong>VENDRE</strong>
                <Big>{sell[0]}<small>{sell[1]}</small></Big>
                <span>B:{low}</span>
            </Side>
            <Side $buy>
                <strong>ACHETER</strong>
                <Big>{buy[0]}<small>{buy[1]}</small></Big>
                <span>H:{high}</span>
            </Side>
            <SpreadBox $top={spreadTop}>{spread}</SpreadBox>
            {children}
        </TicketPrices>
    );
}

function Ticket({ name, size, search, change, meter, children, ...prices }) {
    return (
        <TicketBox>
            <TicketTitle name={name} size={size} search={search} change={change} meter={meter} />
            <PricePair {...prices}>{children}</PricePair>
        </TicketBox>
    );
}

const ticketSpx = { up: true, pct: "0,06 %", pts: "2,65" };
const ticketNdaq = { up: false, pct: "0,16 %", pts: "21,29" };
const ticketDow = { up: true, pct: "0,22 %", pts: "75,46" };
const ticketDax = { up: true, pct: "0,26 %", pts: "40,73" };

const dax = {
    sell: ["15481,", "13"],
    buy: ["15485,", "13"],
    low: "15 443,72",
    high: "15 508,99",
    spread: "4,00",
};

/* ---------- series data ---------- */

const SPX = [3, 972, 40, 985, 60, 970, 80, 962, 105, 985, 118, 900, 128, 945, 137, 880, 150, 870, 172, 820, 180, 890, 205, 905, 240, 925, 275, 945, 295, 1010, 330, 1040, 355, 1015, 364, 950, 378, 990, 400, 1010, 425, 1080, 435, 1060, 455, 1050, 480, 1060, 498, 1105, 530, 1090, 540, 1060, 552, 1120, 582, 1165, 590, 1125, 603, 1050, 615, 1060, 622, 1010, 645, 990, 665, 945, 678, 960, 681, 870, 710, 915, 735, 915, 750, 905, 790, 905, 820, 930, 840, 895, 865, 880, 880, 955, 885, 910, 895, 950, 916, 930, 922, 765, 926, 690, 935, 690, 945, 645, 965, 650, 985, 680, 1005, 655, 1040, 660, 1050, 615, 1060, 640, 1080, 630, 1092, 655, 1105, 560, 1120, 600, 1128, 480, 1145, 510, 1152, 480, 1162, 430, 1170, 580, 1185, 480, 1193, 560, 1205, 580, 1215, 560, 1240, 575, 1260, 560, 1280, 572];
const SPX_SPIKES = [118, 862, 970, 1, 172, 804, 850, 1, 370, 918, 1035, 1, 920, 725, 1023, 1, 914, 882, 995, 1, 930, 598, 730, 1, 1187, 425, 580, 1, 1193, 560, 620, 1, 1177, 540, 612, 1, 1120, 540, 632, 1, 582, 1140, 1182, 1];
const NDAQ = [35, 1060, 45, 970, 55, 1005, 65, 945, 90, 915, 108, 880, 115, 930, 135, 940, 145, 935, 160, 950, 195, 955, 205, 968, 222, 970, 240, 1020, 265, 1040, 280, 1045, 300, 1025, 315, 1020, 318, 1000, 328, 1070, 340, 1045, 360, 1060, 385, 1105, 400, 1095, 420, 1088, 445, 1098, 460, 1140, 500, 1130, 507, 1105, 520, 1145, 553, 1175, 560, 1145, 575, 1135, 580, 1085, 592, 1100, 597, 1045, 610, 1025, 635, 1035, 655, 1010, 662, 975, 672, 1010, 705, 1020, 725, 1022, 740, 1005, 760, 1008, 790, 995, 820, 1003, 835, 965, 850, 985, 865, 980, 877, 1022, 883, 985, 895, 1005, 905, 985, 918, 990, 922, 845, 930, 770, 938, 790, 942, 735, 953, 695, 965, 710, 980, 700, 995, 718, 1020, 705, 1058, 712, 1063, 655, 1080, 670, 1110, 685, 1115, 645, 1125, 620, 1140, 600, 1150, 505, 1165, 515, 1180, 475, 1188, 425, 1198, 560, 1208, 470, 1217, 600, 1240, 600, 1260, 620, 1270, 628, 1300, 608, 1315, 618];
const NDAQ_SPIKES = [922, 815, 1047, 1, 1216, 408, 605, 0, 1222, 590, 645, 1, 318, 988, 1060, 0, 1226, 543, 600, 0, 328, 1040, 1098, 0, 942, 715, 805, 1, 1140, 550, 620, 1];
const DOW = [4, 1085, 25, 1080, 40, 1025, 55, 1035, 72, 1100, 82, 1070, 95, 1105, 105, 1000, 113, 960, 120, 1090, 130, 1090, 140, 1040, 150, 1010, 160, 960, 170, 880, 178, 840, 190, 890, 215, 875, 245, 855, 265, 900, 285, 880, 300, 855, 325, 850, 333, 770, 338, 900, 345, 810, 355, 720, 365, 760, 377, 660, 385, 820, 395, 850, 425, 870, 455, 920, 470, 960, 480, 1040, 500, 1050, 510, 1090, 525, 1020, 535, 940, 540, 820, 547, 900, 560, 890, 570, 920, 580, 1000, 590, 1080, 610, 1065, 630, 1090, 650, 1145, 670, 1140, 685, 1080, 692, 1200, 705, 1235, 717, 1300, 725, 1240, 738, 1060, 750, 1080, 760, 1000, 770, 950, 780, 900, 790, 850, 798, 860, 803, 700, 820, 720, 835, 775, 855, 745, 895, 760, 905, 810, 920, 845, 940, 800, 955, 860, 962, 970, 975, 980, 985, 1060, 995, 1030, 1003, 800, 1008, 560, 1015, 690, 1040, 690, 1055, 780, 1075, 730, 1090, 730, 1105, 700, 1115, 710, 1135, 740, 1145, 840, 1155, 660, 1165, 820, 1175, 780, 1185, 830, 1200, 770, 1210, 860, 1220, 740, 1230, 820, 1240, 790, 1255, 715, 1265, 730, 1285, 695, 1300, 715];
const DOW_SPIKES = [1000, 600, 1292, 1, 1008, 366, 720, 0, 1004, 513, 725, 1, 1168, 780, 1005, 1, 1164, 615, 1005, 0, 377, 576, 685, 1, 331, 630, 800, 0, 335, 765, 977, 1, 718, 1258, 1355, 1, 117, 877, 1185, 0, 126, 960, 1215, 0, 131, 1080, 1217, 0, 962, 904, 1143, 0, 995, 945, 1175, 0, 800, 660, 910, 0, 545, 735, 942, 0, 540, 712, 808, 1, 1158, 598, 710, 1, 1214, 800, 990, 1, 1227, 790, 880, 0, 1222, 675, 835, 0, 590, 1045, 1145, 1, 955, 805, 990, 1, 1110, 618, 670, 0, 1204, 655, 870, 0, 750, 1015, 1182, 1, 683, 1042, 1125, 1];
const DAX30 = [37, 1080, 43, 1160, 50, 1070, 62, 1110, 72, 1150, 80, 1140, 92, 1190, 98, 1120, 108, 1105, 122, 1075, 133, 1010, 145, 1025, 158, 1020, 175, 1050, 188, 1035, 212, 1072, 228, 1030, 245, 1020, 260, 1045, 288, 1065, 296, 1130, 320, 1105, 332, 1135, 350, 1110, 357, 1060, 362, 1135, 380, 1165, 392, 1160, 402, 1220, 410, 1150, 430, 1115, 440, 1065, 450, 1110, 460, 1050, 475, 1020, 500, 1010, 520, 985, 528, 998, 535, 920, 548, 950, 575, 985, 590, 990, 605, 1005, 612, 980, 640, 985, 665, 1000, 685, 1010, 695, 1035, 705, 1000, 716, 1045, 725, 985, 740, 960, 755, 930, 765, 945, 774, 870, 785, 990, 795, 945, 818, 985, 835, 940, 842, 850, 850, 790, 865, 770, 880, 750, 890, 800, 900, 765, 920, 800, 950, 770, 965, 790, 993, 800, 999, 650, 1007, 560, 1015, 625, 1020, 580, 1042, 585, 1055, 660, 1065, 640, 1070, 590, 1078, 500, 1092, 555, 1103, 450, 1112, 430, 1120, 465, 1135, 430, 1146, 385, 1160, 490, 1173, 420, 1180, 500, 1190, 515, 1200, 515];
const DAX30_SPIKES = [1178, 345, 560, 0, 1184, 490, 615, 0, 852, 730, 800, 0, 92, 1155, 1242, 0, 839, 825, 1016, 0, 686, 937, 1020, 0, 1067, 565, 690, 0, 1095, 520, 602, 0, 50, 1035, 1120, 0, 140, 972, 1030, 0, 874, 720, 760, 0, 860, 740, 845, 0, 409, 1150, 1236, 0];
const DAX30_LATE = [1205, 450, 1225, 455, 1245, 478, 1270, 462, 1292, 460, 1297, 480];

const DAX3_A = [3, 380, 20, 400, 27, 365, 38, 400, 50, 405, 70, 425, 78, 520, 90, 545, 105, 505, 112, 560, 118, 530, 130, 520, 137, 440, 145, 500, 150, 600, 155, 540, 160, 600, 168, 590, 178, 640, 184, 680, 190, 690, 193, 590, 205, 550, 213, 500, 222, 430, 228, 510, 236, 520, 243, 420, 255, 375, 270, 385, 285, 350, 305, 310, 318, 290, 323, 215, 330, 260, 345, 285, 358, 315, 372, 310, 385, 345, 394, 290, 410, 295, 430, 310, 445, 345, 458, 370, 468, 260, 475, 400, 488, 330, 500, 400, 507, 370, 512, 330, 525, 270, 540, 200, 547, 260, 557, 160, 562, 270, 570, 330, 580, 245, 590, 290, 598, 320, 610, 260, 615, 320, 620, 260, 624, 120, 630, 60, 640, 10, 648, -30, 655, -60, 662, -80, 672, -50, 690, -20, 700, -15, 720, -50, 735, -35, 742, -15];
const DAX3_A_SPIKES = [323, 212, 250, 1, 468, 238, 300, 1, 475, 380, 430, 1, 557, 130, 200, 0, 222, 413, 470, 1, 190, 670, 710, 1, 137, 412, 460, 1, 620, 240, 360, 1];
const DAX3_B = [5, 1230, 20, 1265, 40, 1280, 60, 1310, 75, 1270, 85, 1300, 90, 1240, 95, 1150, 98, 950, 105, 850, 118, 800, 122, 980, 135, 900, 150, 860, 165, 910, 180, 890, 190, 990, 200, 1060, 210, 1020, 222, 1050, 228, 870, 240, 850, 245, 680, 258, 820, 265, 800, 275, 860, 282, 680, 300, 650, 308, 590, 325, 660, 345, 640, 355, 580, 375, 520, 382, 610, 400, 700, 410, 640, 425, 650, 430, 500, 435, 740, 445, 820, 455, 700, 470, 720, 480, 750];
const DAX3_C = [482, 650, 500, 635, 520, 645, 545, 690, 570, 660, 605, 655, 640, 635, 655, 680];
const DAX5_A = [20, 1050, 30, 1080, 37, 1035, 50, 1055, 62, 1040, 75, 1080, 88, 1040, 98, 1010, 110, 1030, 125, 1040, 135, 1060, 145, 1110, 160, 1105, 170, 1135, 185, 1110, 198, 1050, 215, 1080, 228, 1070, 235, 1040, 265, 1020, 280, 1040, 300, 1020, 325, 1000, 340, 1030, 352, 1065, 370, 1060, 385, 1075, 410, 1055, 435, 1090, 455, 1078, 480, 1090, 500, 1098, 525, 1110, 540, 1130, 558, 1130, 565, 1190, 572, 1100, 580, 1120, 590, 1110, 596, 1190, 603, 1150, 620, 1175, 635, 1200, 643, 1250, 655, 1180, 670, 1160, 690, 1135, 715, 1115, 728, 1050, 745, 1105, 760, 1080, 775, 1090, 800, 1100, 810, 1085, 825, 1100, 845, 1100, 865, 1120, 878, 1080, 895, 1085, 920, 1070, 930, 1090, 955, 1095, 975, 1105, 998, 1120, 1005, 1155, 1020, 1170, 1040, 1165, 1058, 1150, 1075, 1175, 1090, 1160, 1105, 1140, 1112, 1105, 1125, 1150, 1140, 1200, 1160, 1190, 1175, 1215, 1190, 1240, 1204, 1250, 1210, 1200, 1230, 1180, 1250, 1150, 1260, 1110, 1275, 1145, 1290, 1140, 1300, 1095, 1315, 1075, 1345, 1065, 1375, 1065, 1400, 1040, 1425, 1050, 1437, 995, 1450, 1010, 1475, 1020, 1500, 1045, 1525, 1040, 1550, 1060, 1565, 1035];
const DAX5_B = [0, 1032, 40, 1038, 65, 1045, 90, 1062, 110, 1070, 128, 1010, 138, 1090, 150, 1090, 163, 1055, 185, 1095, 200, 1060, 225, 1020, 255, 980, 270, 1000, 283, 950, 295, 1030, 308, 1050, 325, 1005, 345, 1035, 365, 1040, 385, 1000, 398, 1040, 402, 910, 415, 870, 425, 830, 435, 890, 442, 830, 458, 840, 470, 830, 485, 850, 500, 830, 520, 860, 545, 880, 570, 860, 600, 848, 630, 865, 655, 885, 680, 880, 686, 840, 690, 740, 695, 670, 705, 665, 713, 735, 730, 680, 750, 690, 765, 680, 780, 740, 790, 760, 808, 760, 812, 690, 822, 660, 830, 590, 845, 650, 858, 680, 868, 590, 888, 550, 905, 570, 930, 550, 950, 515, 965, 580, 980, 600, 1002, 500, 1008, 620, 1018, 640, 1028, 600, 1050, 620];
const DAX5_C = [1053, 560, 1070, 565, 1090, 560, 1115, 585, 1150, 572, 1185, 572, 1205, 562, 1215, 583];

// x, body top, body bottom, wick top, wick bottom, colour (1 up, 0 down, 2 flat)
const CANDLES = [
    [9, 744, 746, 741, 748, 2], [25, 728, 747, 726, 747, 1], [42, 718, 730, 716, 731, 1], [58, 719, 743, 715, 743, 0],
    [75, 739, 744, 734, 744, 0], [91, 742, 743, 741, 750, 2], [108, 743, 753, 740, 756, 0], [124, 753, 757, 746, 759, 0],
    [141, 755, 759, 755, 763, 0], [157, 754, 758, 752, 761, 1], [174, 755, 762, 747, 775, 0], [190, 765, 770, 765, 770, 0],
    [207, 754, 773, 751, 776, 1], [223, 752, 754, 744, 777, 2], [240, 753, 778, 751, 781, 0], [256, 741, 775, 739, 787, 1],
    [273, 581, 743, 576, 750, 1], [289, 481, 581, 450, 585, 1], [306, 483, 496, 468, 500, 1], [322, 482, 502, 430, 512, 0],
    [338, 495, 538, 480, 556, 0], [355, 512, 538, 490, 545, 1], [371, 500, 518, 486, 530, 1], [388, 498, 508, 490, 520, 0],
    [404, 494, 504, 484, 520, 1], [421, 494, 502, 485, 530, 0], [437, 496, 510, 488, 520, 0], [454, 494, 508, 486, 540, 1],
    [470, 496, 530, 488, 536, 0], [487, 528, 546, 500, 560, 0], [503, 542, 592, 530, 600, 0], [520, 592, 600, 580, 606, 2],
    [536, 582, 600, 570, 620, 1], [553, 588, 592, 560, 600, 2], [569, 584, 596, 575, 625, 0], [586, 540, 596, 520, 620, 1],
    [602, 480, 540, 440, 560, 1], [618, 395, 490, 380, 500, 1], [634, 404, 450, 376, 460, 0], [651, 395, 440, 344, 480, 1],
    [667, 395, 470, 369, 490, 0], [684, 380, 410, 378, 430, 1], [700, 420, 480, 390, 490, 0], [717, 470, 500, 440, 500, 0],
    [734, 440, 500, 430, 510, 1], [751, 350, 440, 340, 450, 1], [767, 332, 352, 326, 357, 1], [784, 325, 332, 313, 369, 1],
    [800, 297, 325, 282, 353, 1], [817, 296, 328, 294, 330, 0], [832, 327, 348, 318, 348, 0], [849, 327, 348, 326, 350, 1],
    [865, 326, 333, 326, 342, 0], [882, 323, 332, 316, 334, 1], [899, 311, 323, 310, 333, 1], [915, 308, 311, 285, 314, 1],
    [932, 304, 310, 290, 316, 1], [948, 267, 303, 259, 303, 1], [965, 248, 266, 245, 272, 1], [981, 249, 308, 245, 312, 0],
    [998, 309, 334, 307, 339, 0], [1014, 334, 357, 329, 372, 0], [1031, 355, 380, 343, 386, 0], [1047, 342, 379, 342, 393, 1],
    [1064, 323, 344, 310, 361, 1], [1080, 324, 335, 303, 352, 0], [1097, 283, 336, 282, 345, 1], [1113, 284, 452, 180, 456, 0],
    [1130, 420, 452, 400, 460, 1], [1146, 418, 498, 410, 550, 0], [1162, 482, 498, 440, 505, 1], [1178, 384, 393, 382, 396, 0],
    [1195, 390, 395, 388, 400, 0], [1211, 393, 395, 376, 410, 2], [1228, 395, 397, 391, 412, 2], [1245, 308, 332, 308, 346, 0],
    [1262, 324, 331, 322, 337, 1], [1278, 324, 326, 320, 328, 1], [1295, 323, 342, 316, 344, 0], [1311, 332, 343, 320, 345, 1],
    [1327, 324, 334, 318, 337, 1], [1344, 323, 333, 318, 339, 0], [1360, 331, 347, 330, 347, 0], [1377, 347, 349, 339, 350, 2],
    [1393, 348, 361, 344, 367, 0], [1410, 360, 362, 358, 368, 2], [1426, 352, 357, 347, 359, 1], [1443, 346, 354, 335, 357, 1],
    [1459, 340, 349, 337, 349, 1], [1476, 340, 342, 339, 346, 2], [1492, 339, 341, 335, 345, 2], [1509, 338, 340, 330, 342, 2],
    [1525, 335, 337, 333, 339, 1], [1542, 334, 340, 332, 340, 0], [1558, 330, 341, 329, 355, 1], [1575, 331, 333, 327, 334, 2],
    [1591, 332, 334, 324, 335, 2], [1608, 330, 340, 330, 340, 0], [1624, 321, 337, 320, 340, 1], [1641, 322, 327, 318, 352, 0],
    [1657, 327, 344, 327, 363, 0], [1674, 342, 353, 342, 353, 0],
];

const CANDLE_FILL = ["#f00", "#00ab00", "#000"];

function Candles() {
    return (
        <g stroke="#000" shapeRendering="crispEdges">
            {CANDLES.map(([x, top, bottom, high, low, c]) => (
                <g key={x}>
                    <path d={`M${x + 0.5} ${high}V${low}`} />
                    <rect x={x - 6} y={top} width="13" height={bottom - top} fill={CANDLE_FILL[c]} />
                </g>
            ))}
        </g>
    );
}

/* ---------- top left workspace ---------- */

const Screen = styled.main`
    display: grid;
    grid-template-columns: minmax(0, 1fr) minmax(0, 1fr);
    min-height: 100vh;
`;

const Column = styled.div`
    display: flex;
    flex-direction: column;
    min-width: 0;
`;

const Workspace = styled.div`
    display: grid;
    grid-template-columns: 933fr 981fr;
    gap: 7px 6px;
    padding: 1px 0 0;
    background: #e4e4e4;
`;

const Wide = styled.div`
    grid-column: 1 / 3;
    min-width: 0;
`;

const quick30 = { interval: "30 minutes", quick: ["5m", "15m", "30m"], ranges: ["SLS", "3J", "1S"], model: "1", side: "Vente", active: ["updown", "cross", "stretch"] };
const grow = { up: "#5a9e0a", down: "#f03010" };
const tealOrange = { up: "#1aacb4", down: "#ee9a1c", flat: "#000" };

const ProductTable = styled.table`
    width: 100%;
    background: #fff;
    table-layout: fixed;
    th {
        height: 24px;
        padding: 0 6px;
        font-size: 10px;
        text-align: right;
        color: #666;
        border-bottom: 2px solid #ddd;
    }
    td {
        height: 20px;
        padding: 0 12px 0 6px;
        text-align: right;
    }
    th:first-child, td:first-child { text-align: left; border-right: 1px solid #e8e8e8; }
    tbody tr:nth-child(even) { background: #f4f4f4; }
`;

const Name = styled.span`
    display: flex;
    align-items: center;
    gap: 5px;
    font-weight: bold;
    color: #222;
    svg { color: #999; }
`;

const Tint = styled.span`
    color: ${(p) => p.$c};
`;

const Perf = styled.span`
    display: flex;
    justify-content: space-between;
    color: ${(p) => (p.$up ? "#3c8a1e" : "#d01c20")};
`;

const PRODUCTS = [
    ["US SPX 500", "4 150,55", "4 165,42", true, "0,06 %", "2,65", "4 154,96", "4 155,56"],
    ["US NDAQ 100", "12 567,32", "12 708,46", false, "0,16 %", "21,29", "12 598,98", "12 600,98"],
    ["US 30", "33 960,56", "34 081,25", true, "0,22 %", "75,46", "34 046,70", "34 050,70"],
    ["Allemagne 40", "15 443,72", "15 508,99", true, "0,26 %", "40,73", "15 481,13", "15 485,13"],
];

const TableEnd = styled.div`
    height: 6px;
    background: #f8f8f8;
`;

function Watchlist() {
    return (
        <Win $border="0 0 1px 0">
            <TitleBar>
                <Burger aria-label="Menu"><Icon name="burger" /></Burger>
                <SymbolTab>
                    <SymbolName>USA E-U</SymbolName>
                    <Icon name="down" size={12} />
                    <Icon name="search" size={15} />
                </SymbolTab>
                <AddTab aria-label="Ajouter"><Icon name="plus" /></AddTab>
                <Spacer />
                <Meter />
                <WinButton aria-label="Agrandir"><Icon name="expand" size={13} /></WinButton>
                <WinButton aria-label="Fermer"><Icon name="close" size={13} /></WinButton>
            </TitleBar>
            <ProductTable>
                <colgroup>
                    <col style={{ width: "31.2%" }} /><col style={{ width: "26%" }} /><col style={{ width: "17.7%" }} />
                    <col style={{ width: "8.3%" }} /><col style={{ width: "8.2%" }} /><col />
                </colgroup>
                <thead>
                    <tr>
                        <th><Tint $c="#111">PRODUIT ▼</Tint></th>
                        <th>PLUS BAS ♦</th>
                        <th>PLUS HAUT ♦</th>
                        <th style={{ textAlign: "center" }}>PERFORMANCE ♦</th>
                        <th><Tint $c="#cf7c00">VENTE</Tint></th>
                        <th><Tint $c="#0c8fa6">ACHAT</Tint></th>
                    </tr>
                </thead>
                <tbody>
                    {PRODUCTS.map(([name, low, high, up, pct, pts, sell, buy]) => (
                        <tr key={name}>
                            <td><Name><Icon name="dots" size={16} />{name}</Name></td>
                            <td>{low}</td>
                            <td>{high}</td>
                            <td><Perf $up={up}><span>{up ? "▲" : "▼"} {pct}</span><span>{pts}</span></Perf></td>
                            <td><Tint $c="#8a6420">{sell}</Tint></td>
                            <td><Tint $c="#4a6f80">{buy}</Tint></td>
                        </tr>
                    ))}
                </tbody>
            </ProductTable>
            <TableEnd />
        </Win>
    );
}

function IndicesScreen() {
    return (
        <>
            <PlatformHeader kind="Demo" number="20600479" tabs={["Devises", "Commodities", "Indices"]} active="Indices" cta={"Ajouter\ndes Fonds"} />
            <Workspace>
                <ChartWindow num="1" name="US SPX 500" change={ticketSpx} sell="4 154,96" buy="4 155,56" spread="6,0" {...quick30} range="8 Jours" noLabel
                    ticket={<FloatingTicket $left={5} $top={74}><Ticket name="US SPX 500" size={10} change={ticketSpx} sell={["4154,9", "6"]} buy={["4155,5", "6"]} low="4 150,55" high="4 165,42" spread="6,0" /></FloatingTicket>}>
                    <Chart height={289} marker={786}
                        dates={[[142, "30 janv."], [295, "31 janv."], [445, "1 févr."], [598, "2 févr."], [752, "3 févr."]]}
                        prices={[[13, "4 200,00"], [50, "4 170,00"], [88, "4 140,00"], [126, "4 110,00"], [163, "4 080,00"], [201, "4 050,00"], [239, "4 020,00"], [72, "", "red", "bar"], [68, "4 154,96", "green", "big"], [276, "3 988,26", "black", "bar"]]}>
                        <HLine y={69.5} color="#f00" w={1} />
                        <HLine y={73.5} color="#d00" dash="2 2" />
                        <Series points={SPX} spikes={SPX_SPIKES} map={[1.633, 0, 3, -121]} step={3.3} vol={3} {...grow} wick="#000" />
                    </Chart>
                </ChartWindow>
                <ChartWindow num="1" name="US NDAQ 100" change={ticketNdaq} sell="12 598,98" buy="12 600,98" spread="2,00" {...quick30} range="8 Jours"
                    ticket={<FloatingTicket $left={-6} $top={74}><Ticket name="US NDAQ 100" size={11} search={false} change={ticketNdaq} sell={["12598,", "98"]} buy={["12600,", "98"]} low="12 567,32" high="12 708,46" spread="2,00" /></FloatingTicket>}>
                    <Chart height={289} marker={824}
                        dates={[[87, "30 janv."], [262, "31 janv."], [433, "1 févr."], [607, "2 févr."], [782, "3 févr."]]}
                        prices={[[37, "12 800,00"], [133, "12 400,00"], [180, "12 200,00"], [228, "12 000,00"], [276, "11 800,00"], [80, "", "red", "bar"], [84, "12 598,98", "green", "big"], [108, "12 491,86", "black", "bar"]]}>
                        <HLine y={80.5} color="#d00" dash="2 2" />
                        <HLine y={85.5} color="#f00" w={1} />
                        <Series points={NDAQ} spikes={NDAQ_SPIKES} map={[1.568, -19, 3, -121]} step={3.7} vol={3} seed={21} {...grow} />
                    </Chart>
                </ChartWindow>
                <ChartWindow num="1" name="US 30" change={ticketDow} sell="34 046,70" buy="34 050,70" spread="4,00" {...quick30} range="9 Jours" noLabel
                    ticket={<FloatingTicket $left={5} $top={49}><Ticket name="US 30" change={ticketDow} sell={["34046,", "70"]} buy={["34050,", "70"]} low="33 960,56" high="34 081,25" spread="4,00" /></FloatingTicket>}>
                    <Chart height={395} marker={798}
                        dates={[[264, "30 janv."], [392, "31 janv."], [517, "1 févr."], [645, "2 févr."], [773, "3 févr."]]}
                        prices={[[17, "34 400,00"], [97, "34 200,00"], [177, "34 000,00"], [257, "33 800,00"], [337, "33 600,00"], [188, "33 971,24", "red", "bar"], [158, "34 046,70", "dark", "big"]]}>
                        <HLine y={159.5} color="#f00" />
                        <HLine y={189.5} x={80} color="#d00" dash="2 2" />
                        <text x="0" y="194" fill="#f01818">75,46 / 0,22 %</text>
                        <Series points={DOW} spikes={DOW_SPIKES} map={[1.633, 0, 3, -80]} step={2.7} vol={8} seed={5} {...grow} body={0} />
                    </Chart>
                </ChartWindow>
                <ChartWindow num="1" name="Allemagne 40" change={ticketDax} sell="15 481,13" buy="15 485,13" spread="4,00" {...quick30} range="5 Jours"
                    ticket={<FloatingTicket $left={-6} $top={49}><Ticket name="Allemagne 40" search={false} change={ticketDax} {...dax} /></FloatingTicket>}>
                    <Chart height={395} marker={811}
                        dates={[[354, "1 févr."], [557, "2 févr."], [760, "3 févr."]]}
                        prices={[[17, "15 600,00"], [67, "15 500,00"], [120, "15 400,00"], [172, "15 300,00"], [223, "15 200,00"], [275, "15 100,00"], [326, "15 000,00"], [377, "14 900,00"], [100, "15 438,65", "red", "bar"], [78, "15 481,13", "dark", "big"], [338, "14 971,94", "black", "bar"]]}>
                        <HLine y={79.5} color="#f00" />
                        <HLine y={100.5} x={82} color="#d00" dash="2 2" />
                        <text x="1" y="105" fill="#f01818">42,48 / 0,28 %</text>
                        <Series points={DAX30} spikes={DAX30_SPIKES} map={[1.568, -19, 3, -80]} step={4.4} vol={4} seed={11} {...grow} wick="#000" body={3} />
                        <Series points={DAX30_LATE} map={[1.568, -19, 3, -80]} step={4.4} vol={2} seed={3} {...grow} wick="#000" body={3} />
                    </Chart>
                </ChartWindow>
                <Wide><Watchlist /></Wide>
            </Workspace>
        </>
    );
}

/* ---------- bottom left desktop ---------- */

const Desktop = styled.div`
    flex: 1;
    background: linear-gradient(#d8ebf5, #eceef0 140px);
`;

const DesktopRow = styled.div`
    display: flex;
    align-items: flex-start;
    gap: 3px;
    padding: 1px 51px 0 1px;
    > section:first-child { flex: 1; }
`;

const OrderBox = styled(TicketBox)`
    width: 253px;
    padding-bottom: 12px;
`;

const OrderSection = styled.form`
    display: grid;
    grid-template-columns: 88px 89px 58px;
    column-gap: 3px;
    padding: 8px 5px;
    background: ${(p) => (p.$tone)};
    border-bottom: 1px solid #c9cacc;
`;

const FieldLabel = styled.label`
    display: flex;
    align-items: center;
    justify-content: ${(p) => (p.$left ? "flex-start" : "center")};
    gap: 5px;
    height: 18px;
    color: ${(p) => p.$c || "#7a6640"};
    white-space: nowrap;
`;

const Field = styled.input`
    grid-row: 2;
    width: 100%;
    height: 30px;
    border: 1px solid #b9babc;
    border-radius: 3px;
    background: #fff;
    text-align: center;
    color: ${(p) => (p.$muted ? "#808386" : "#222")};
`;

const Mode = styled.button`
    grid-column: 3;
    grid-row: ${(p) => (p.$late ? "2 / 4" : "1 / 3")};
    height: 47px;
    display: grid;
    grid-template-rows: 25px 22px;
    justify-items: stretch;
    color: #fff;
    span { background: ${(p) => p.$c}; line-height: 25px; border-radius: 3px 3px 0 0; }
    div {
        display: flex;
        align-items: center;
        justify-content: center;
        color: ${(p) => p.$c};
        background: #efeff0;
        border: 1px solid #c3c4c6;
        border-radius: 0 0 3px 3px;
    }
`;

const MiniIcon = styled.span`
    display: flex;
    align-items: center;
    justify-content: center;
    width: 16px;
    height: 16px;
    border: 1px solid #c3c4c6;
    border-radius: 3px;
    background: #fff;
    color: ${(p) => p.$c};
`;

const Corner = styled.div`
    display: flex;
    justify-content: flex-end;
`;

const Risk = styled.div`
    grid-column: 1 / 3;
    padding-top: 9px;
    font-size: 11px;
    text-align: right;
    color: #97999b;
`;

const OrderRow = styled.div`
    display: flex;
    align-items: center;
    gap: 4px;
    height: 29px;
    padding: 0 10px 0 9px;
    border-bottom: 1px solid #cfd0d2;
    color: ${(p) => p.$c || "#333"};
    span:last-of-type { flex: 1; }
`;

const Indent = styled.i`
    width: 8px;
`;

const PlaceOrder = styled.button`
    display: block;
    width: 227px;
    height: 53px;
    margin: 14px auto 0;
    padding: 0 20px;
    border-radius: 3px;
    background: #d08600;
    color: #fff;
    font-size: 14px;
    line-height: 16px;
`;

function OrderTicket() {
    return (
        <OrderBox>
            <TicketTitle name="Allemagne 40" meter />
            <PricePair {...dax} hot height={71}>
                <Level>
                    <select aria-label="Niveau" defaultValue="1"><option value="1">Niveau 1</option></select>
                    <Icon name="down" size={10} />
                </Level>
            </PricePair>
            <OrderSection $tone="#dbdcde">
                <FieldLabel htmlFor="units">Unités</FieldLabel>
                <FieldLabel htmlFor="amount">Montant (€)</FieldLabel>
                <Field id="units" defaultValue="0,01" />
                <Field id="amount" defaultValue="154,81" $muted />
                <Mode type="button" $c="#d08600"><span>Marché</span><div><Icon name="down" size={14} /></div></Mode>
            </OrderSection>
            <OrderSection $tone="#f0f0f1">
                <FieldLabel htmlFor="stop" $left $c="#e01020"><MiniIcon $c="#0c8fa6"><Icon name="upArrow" size={11} /></MiniIcon>Stop Loss</FieldLabel>
                <FieldLabel htmlFor="points" $left $c="#97999b"><MiniIcon $c="#d01c20"><Icon name="wave" size={12} /></MiniIcon>&nbsp; Points</FieldLabel>
                <Corner><MiniIcon $c="#d01c20"><Icon name="close" size={12} /></MiniIcon></Corner>
                <Field id="stop" defaultValue="15493,13" $muted />
                <Field id="points" defaultValue="12,00" />
                <Mode type="button" $late $c="#dc1418"><span>Classique</span><div><Icon name="down" size={14} /></div></Mode>
                <Risk>Montant (€) 0,12</Risk>
            </OrderSection>
            <OrderRow $c="#3c8a3c"><span>+ Take Profit</span></OrderRow>
            <OrderRow><Icon name="right" size={8} /><span>Marge Estimée (€)</span>7,74</OrderRow>
            <OrderRow><Icon name="right" size={8} /><span>Coûts Estimés (€)</span>0,03</OrderRow>
            <OrderRow><Indent /><span>Document d'Informations clés</span><Icon name="download" size={15} /></OrderRow>
            <PlaceOrder>Placer Ordre au Marché de Vente</PlaceOrder>
        </OrderBox>
    );
}

const BottomRow = styled.div`
    display: flex;
    align-items: flex-start;
    gap: 75px;
    padding: 25px 35px 0 334px;
    > section:first-child { flex: 1; }
    > div { margin-top: 12px; }
`;

const Panel = styled(Win)`
    min-height: 155px;
    border-radius: 3px 3px 0 0;
`;

const PanelTab = styled.button`
    padding: 0 8px;
    color: #777;
`;

const OrdersTable = styled.table`
    width: 100%;
    th {
        height: 23px;
        padding: 0 5px;
        font-size: 10px;
        text-align: right;
        color: #5f6a75;
        border-right: 1px solid #ececec;
        border-bottom: 1px solid #ddd;
        white-space: nowrap;
    }
    th:nth-child(2) { text-align: left; color: #111; }
    th:last-child { border-right: 0; }
`;

const Notice = styled.div`
    width: 722px;
    height: 55px;
    margin: 12px auto;
    display: flex;
    align-items: center;
    border: 1px solid #c6c7c9;
    border-radius: 3px;
    font-size: 13px;
    color: #555;
    > span {
        width: 44px;
        height: 100%;
        margin-right: 11px;
        background: #dbdcde;
        display: flex;
        align-items: center;
        justify-content: center;
    }
`;

const ORDER_COLS = [
    ["ID", 34], ["POSITION/ORDRE N° ▲", 0], ["A/V", 32], ["UNITÉS", 99], ["COURS", 101], ["PV&MV TOTALES ♦", 139],
    ["STOP LOSS", 101], ["TAKE PROFIT", 100], ["VENTE", 74, "#cf7c00"], ["ACHAT", 76, "#0c8fa6"], ["", 52],
];

function PositionsPanel() {
    return (
        <Panel $border="1px">
            <TitleBar>
                <Burger aria-label="Menu"><Icon name="burger" /></Burger>
                <SymbolTab><SymbolName>Positions (0)</SymbolName><Icon name="close" size={12} /></SymbolTab>
                <PanelTab>Carnet des Ordres Exécutés</PanelTab>
                <PanelTab>Ordres (0)</PanelTab>
                <AddTab aria-label="Ajouter"><Icon name="plus" /></AddTab>
                <Spacer />
                <Meter on />
                <WinButton aria-label="Agrandir"><Icon name="expand" size={13} /></WinButton>
                <WinButton aria-label="Fermer"><Icon name="close" size={13} /></WinButton>
            </TitleBar>
            <OrdersTable>
                <thead>
                    <tr>
                        {ORDER_COLS.map(([label, w, color]) => (
                            <th key={label} style={w ? { width: w } : undefined}><Tint $c={color}>{label}</Tint></th>
                        ))}
                    </tr>
                </thead>
            </OrdersTable>
            <Notice><span><Icon name="infoSolid" size={18} /></span>Aucune Transaction Ou Position.</Notice>
        </Panel>
    );
}

const FIB = [[89, "(0,00 %)", 80], [153.5, "(23,60 %)", 145], [194, "(38,20 %)", 185], [227, "(50,00 %)", 218], [259, "(61,80 %)", 250], [305, "(78,60 %)", 296], [364, "(100,00 %)", 355]];

function TradeScreen() {
    return (
        <>
            <PlatformHeader kind="Réel" number="21978588" tabs={["Trade", "Action Europe", "Action Usa"]} active="Trade" mouse cta={"Ajouter\ndes Fonds"} />
            <Desktop>
                <DesktopRow>
                    <ChartWindow num="2" name="Allemagne 40" border="1px" change={ticketDax} sell="15 481,13" buy="15 485,13" spread="4,00" meter
                        interval="3 minutes" quick={["10s", "30s", "1m"]} range="4 Jours" ranges={["SLS", "1J", "1S"]} model="J" side="Achat" active={["pencil", "updown", "cross"]}>
                        <Chart height={740} marker={1324} from="#e7e7e7" tone="#dac8b8"
                            dates={[[429, "1 févr."], [820, "2 févr."], [1211, "3 févr."]]}
                            prices={[[33, "15 600,00"], [418, "15 200,00"], [514, "15 100,00"], [610, "15 000,00"], [707, "14 900,00"],
                                [89, "15 541,60", "purple"], [128, "15 500,00", "lime"], [153, "15 474,29", "purple"], [194, "15 432,65", "purple"],
                                [226, "15 398,99", "purple"], [259, "15 365,33", "purple"], [304, "15 317,42", "purple"], [322, "15 300,00", "gray"],
                                [364, "15 256,38", "purple"], [414, "15 204,63", "gray"], [492, "15 121,48", "gray"]]}>
                            <HLine y={129} x={870} color="#0f0" w={4} dash="2 2" />
                            <HLine y={322} x={580} color="#999" w={3} dash="2 2" />
                            <HLine y={414} x={581} color="#999" w={3} dash="2 2" />
                            <HLine y={479} x={624} to={750} color="#999" w={3} dash="2 2" />
                            <HLine y={494} x={531} color="#999" w={3} dash="2 2" />
                            <Box x={-4} y={397} w={938} h={11} stroke="#00d4f0" opacity={0.09} />
                            <Box x={-4} y={633} w={972} h={11} stroke="#00d4f0" opacity={0.09} />
                            <Box x={226} y={598} w={483} h={12} stroke="#f5a000" opacity={0.08} />
                            <Box x={228} y={610} w={198} h={8} stroke="#1456e0" />
                            <Box x={696} y={436} w={54} h={32} stroke="#1456e0" />
                            <Box x={176} y={518} w={27} h={7} stroke="#00d4f0" />
                            <Box x={179} y={537} w={24} h={7} stroke="#00d4f0" />
                            <Box x={298} y={493} w={27} h={8} stroke="#00d4f0" />
                            <Box x={298} y={516} w={13} h={4} stroke="#00d4f0" />
                            <Box x={-4} y={528} w={14} h={18} stroke="#00d4f0" />
                            <Box x={760} y={442} w={10} h={40} stroke="#00d4f0" />
                            <Box x={758} y={423} w={12} h={14} stroke="#f5a000" />
                            <Box x={22} y={480} w={13} h={22} stroke="#e800e8" opacity={0} />
                            <Series points={DAX3_A} spikes={DAX3_A_SPIKES} map={[0.8167, -2, 2.521, 338]} step={2} vol={6} seed={17} {...tealOrange} />
                            <Series points={DAX3_B} spikes={[430, 455, 600, 1, 443, 700, 930, 0]} map={[1.5373, 898, 3, -82]} step={2} vol={9} seed={9} {...tealOrange} />
                            <Series points={DAX3_C} map={[1.5373, 898, 3, -82]} step={2} vol={4} seed={4} {...tealOrange} />
                            {FIB.map(([y, label, ty], i) => (
                                <g key={label}>
                                    <HLine y={y} x={934} color="#850085" w={2} dash={i === 0 || i === 6 ? undefined : "2 2"} />
                                    <text x="937" y={ty + 4} fill="#9a2a9a">{label}</text>
                                </g>
                            ))}
                            <path d="M166 502l4 30 3-14 5 52 1-31 5 43" fill="none" stroke="#000" strokeWidth="3" />
                            <path d="M173 518L226 596" stroke="#f0a000" strokeWidth="1.500" />
                            <path d="M180 560l3 30M192 580v18" stroke="#f01818" strokeWidth="1.500" />
                            <text x="170" y="515">2</text><text x="173" y="584">3</text><text x="180" y="595">5</text>
                            <rect x="905" y="276" width="146" height="16" fill="#b9f0a0" stroke="#006400" />
                            <path d="M1050 275l8 9-8 9z" fill="#006400" />
                            <text x="907" y="288" fontStyle="italic">+ haut en + haut&gt; montant</text>
                            <path d="M951 355L975 181 1042 280 1062 135 1081 220 1132 83" fill="none" stroke="#dcc800" strokeWidth="2" />
                            <g fill="#dcc800"><text x="971" y="177">1</text><text x="1058" y="132">3</text><text x="1128" y="85">5</text><text x="1038" y="294">2</text></g>
                            <g fill="none" stroke="#dcc800" strokeWidth="1.500"><ellipse cx="1141" cy="90" rx="4" ry="15" /><ellipse cx="1161" cy="160" rx="4" ry="16" /></g>
                            <rect x="1126" y="83" width="67" height="12" fill="none" stroke="#999" strokeDasharray="4 3" />
                            <Box x={1075} y={216} w={118} h={7} stroke="#1456e0" opacity={0.28} />
                            <Box x={1044} y={268} w={25} h={8} stroke="#1456e0" opacity={0.28} />
                            <Box x={952} y={351} w={29} h={8} stroke="#1456e0" opacity={0.28} />
                            <Box x={1160} y={161} w={26} h={4} stroke="#38c8f0" opacity={0} />
                            <ellipse cx="1178" cy="55" rx="3.500" ry="15" fill="#f8c8c8" stroke="#f00" strokeWidth="1.500" />
                            <Arrow x={1184} y={225} up tall={30} />
                        </Chart>
                    </ChartWindow>
                    <OrderTicket />
                </DesktopRow>
                <BottomRow>
                    <PositionsPanel />
                    <div>
                        <Ticket name="Allemagne 40" search={false} change={ticketDax} meter {...dax} spreadTop>
                            <Lots><input aria-label="Quantité" defaultValue="0,01" /><span><Icon name="down" size={10} /></span></Lots>
                        </Ticket>
                    </div>
                </BottomRow>
            </Desktop>
        </>
    );
}

/* ---------- top right ---------- */

const TabStrip = styled.div`
    display: flex;
    gap: 4px;
    height: 24px;
    padding: 3px 2px 2px;
    background: #b5b6b8;
`;

const StripTab = styled.button`
    padding: 0 20px;
    border-radius: 3px;
    background: ${(p) => (p.$on ? "#fff" : "#eeeff1")};
    color: ${(p) => (p.$on ? "#1a7cf0" : "#222")};
`;

const Palette = styled.div`
    display: flex;
    gap: 16px;
    height: 71px;
    padding: 8px 0 0 10px;
    border-top: 1px solid #a9abad;
    border-left: 20px solid #ededed;
    background: #f5f5f5;
    overflow: hidden;
`;

const Tool = styled.button`
    flex: none;
    width: 44px;
    display: flex;
    flex-direction: column;
    align-items: center;
    font-size: 10px;
    font-weight: bold;
    color: #667;
    white-space: nowrap;
    svg {
        width: 44px;
        height: 43px;
        margin-bottom: 2px;
        border: 1px solid #c0c0c0;
        border-radius: 4px;
        background: #fff;
    }
`;

const EmptyTool = styled.div`
    flex: none;
    width: 44px;
    height: 42px;
    border: solid #f5f5f5;
    border-width: 0 1px;
    border-radius: 4px;
    background: #e4e4e4;
`;

const dot = (x, y) => <circle key={`${x}-${y}`} cx={x} cy={y} r="2.500" stroke="#777" fill="#fff" strokeWidth="1.200" />;

const TOOLS = [
    ["Ligne De ...", <g><path d="M15 25l13-9" stroke="#e0a000" />{dot(12, 27)}{dot(30, 15)}</g>],
    ["Ligne S/r", <g><path d="M16 21h11" stroke="#e0a000" />{dot(12, 21)}{dot(31, 21)}</g>],
    ["Cours", <g><path d="M13 13h18v16H13z" fill="#bfeaff" stroke="none" /><path d="M9 12h18M14 31h20" stroke="#00b4f0" /><path d="M22 28V15M19 18l3-3 3 3" stroke="#555" strokeWidth="1.200" />{dot(31, 12)}{dot(12, 31)}</g>],
    ["Fixe", <g><path d="M21 14v14" stroke="#e8c000" />{dot(21, 12)}{dot(21, 31)}</g>],
    ["Nb", <g><text x="17" y="28" fontSize="16" fill="#666" stroke="none">A</text>{dot(14, 21)}</g>],
    ["Fibonacci", <g><path d="M17 12h17M9 31h24M13 13l8 17" stroke="#00b4f0" strokeWidth="1.600" /><path d="M9 18h25M9 22h25M9 26h25" stroke="#888" strokeWidth="1" strokeDasharray="2 1" />{dot(12, 12)}{dot(21, 31)}</g>],
    ["Cycle Fib.", <g><path d="M21 9v24M12 31l8-10M34 9v24" stroke="#00b4f0" strokeWidth="1.600" /><path d="M26 9v24M29 9v24" stroke="#555" strokeWidth="1" />{dot(20, 22)}{dot(12, 31)}</g>],
    ["Rectangle", <g><path d="M12 12h19v18H12z" stroke="#38b000" />{dot(30, 12)}{dot(12, 30)}</g>],
    ["Ovale", <ellipse cx="21" cy="21" rx="11" ry="9" transform="rotate(-35 21 21)" stroke="#38b000" />],
    ["Flèche", <g stroke="#666"><path d="M12 30l9-9" strokeDasharray="2 2" /><path d="M21 21l8-8M20 12h10v10" /></g>],
    ["Vague Mo...", <g><path d="M13 22l8 9 9-18" stroke="#f05010" strokeWidth="1.600" />{dot(12, 21)}{dot(21, 31)}{dot(31, 12)}</g>],
    ["Vague Co...", <g><path d="M12 21l6 9 3-14 6 7 4-11" stroke="#f05010" strokeWidth="1.600" />{dot(12, 21)}{dot(18, 31)}{dot(20, 15)}{dot(28, 23)}{dot(31, 12)}</g>],
];

function DrawingPalette() {
    return (
        <Palette>
            {TOOLS.map(([label, art]) => (
                <Tool key={label}>
                    <svg viewBox="0 0 42 41" fill="none" strokeWidth="2">{art}</svg>
                    {label}
                </Tool>
            ))}
            {Array.from({ length: 19 }, (_, i) => <EmptyTool key={i} />)}
        </Palette>
    );
}

const HOURS = [
    ...Array.from({ length: 17 }, (_, i) => [75 + Math.round(i * 65.900), `${String(i + 6).padStart(2, "0")}:00`]),
    [1197, "3 févr."], [1262, "01:15"],
    ...Array.from({ length: 9 }, (_, i) => [1312 + Math.round(i * 65.900), `${String(i + 2).padStart(2, "0")}:00`]),
];

function HomeScreen() {
    return (
        <>
            <PlatformHeader top={2} kind="Demo" number="13201555" tabs={["Accueil"]} active="Accueil" mouse cta={"Ouvrir un\nCompte Réel"} ctaIcon="addUser" noWindows />
            <TabStrip>
                {["Allemagne 40 - Mar 2023", "AMERICA", "ASIE", "DIVERS", "EUROPE", "Positions (0)"].map((t, i) => (
                    <StripTab key={t} $on={i === 0}>{t}</StripTab>
                ))}
            </TabStrip>
            <ChartWindow num="1" name="Allemagne 40 - Mar 2023" border="0" change={{ up: true, pct: "0,42 %", pts: "65,55" }} sell="15 529,0" buy="15 535,0" spread="6,0" meter shrink
                interval="15 minutes" quick={["2m", "3m", "5m"]} range="2 Jours" ranges={[]} model="2" side="Achat" active={["pencil", "updown", "cross", "stretch"]} favorite palette={<DrawingPalette />}>
                <Chart height={840} marker={1689} from="#fff" dates={HOURS}
                    prices={[[37, "15 700,0"], [228, "15 600,0"], [420, "15 500,0"], [611, "15 400,0"], [803, "15 300,0"],
                        [181, "15 624,3", "gray"], [352, "15 535,0", "dark", "big"], [476, "15 470,7", "red", "bar"], [550, "15 431,7", "gray"],
                        [673, "15 367,6", "black", "pill", -33], [770, "15 316,7", "black", "pill", -33], [831, "15 285,2", "black", "pill", -33]]}>
                    <rect x="1178" y="184" width="577" height="365" fill="#e5e5e5" stroke="#000" strokeDasharray="5 4" />
                    <Box x={-4} y={658} w={259} h={120} stroke="#f000f0" opacity={0.07} />
                    <Box x={-4} y={764} w={194} h={43} stroke="#00d4f0" opacity={0.1} />
                    <Box x={190} y={768} w={83} h={27} stroke="#00d4f0" opacity={0.1} />
                    <HLine y={182} x={585} color="#8d8d8d" w={3} dash="2 2" />
                    <HLine y={550} x={914} color="#8d8d8d" w={3} dash="2 2" />
                    <HLine y={476.500} color="#f88" dash="2 1" />
                    <text x="0" y="482" fill="#f01818">64,3 / 0,42 %</text>
                    <g fill="#444"><text x="3" y="669">(0,00 %)</text><text x="3" y="765">(23,60 %)</text><text x="3" y="826">(38,20 %)</text></g>
                    <Candles />
                    <HLine y={353.500} color="#333" />
                    <HLine y={673} color="#000" w={2} />
                    {[770, 795, 808, 831].map((y) => <HLine key={y} y={y} to={1815} color="#000" w={2} dash="2 2" />)}
                    <Arrow x={1541} y={183} tall={30} />
                    <Arrow x={1589} y={589} tall={30} />
                    <Arrow x={1707} y={554} up tall={30} />
                    <Arrow x={188} y={794} tall={30} />
                    <Arrow x={272} y={807} up tall={30} />
                    <rect x="1437" y="569" width="80" height="16" fill="#fff" stroke="#f00" />
                    <path d="M1517 568l9 9-9 9z" fill="#f00" />
                    <text x="1440" y="581" fontStyle="italic" fontSize="13">ASIE Japon</text>
                </Chart>
            </ChartWindow>
        </>
    );
}

/* ---------- bottom right browser pop-out ---------- */

const BrowserTitle = styled.div`
    display: flex;
    align-items: center;
    height: 25px;
    padding: 0 16px 0 7px;
    gap: 6px;
    background: #e8eaee;
    border-bottom: 1px solid #bfc1c4;
    color: #86898c;
    font-family: "Open Sans", "Noto Sans", sans-serif;
`;

const BrowserControls = styled.div`
    display: flex;
    gap: 32px;
    margin-left: auto;
`;

const AddressBar = styled.div`
    display: flex;
    align-items: center;
    gap: 10px;
    height: 28px;
    padding: 0 12px;
    background: #f1f3f5;
    border-bottom: 2px solid #cfd1d3;
    color: #5c5f63;
    font-family: "Open Sans", "Noto Sans", sans-serif;
    font-size: 14px;
    line-height: 20px;
    a { color: #72767a; text-decoration: none; }
    b { color: #303336; font-weight: normal; }
`;

const LEVELS = [
    [31, "mint", 2], [85, "cyan", 2], [174, "mint", 2], [192, "forest", 3, "2 2"], [246, "orange", 2],
    [317, "orange", 2, "2 2"], [388, "orange", 2], [439, "orange", 2, "2 2"],
    [477, "mint", 2], [482, "cyan", 3, "2 2"], [491, "orange", 2], [495, "forest", 3, "2 2"],
    [529, "orange", 3, "2 2"], [532, "cyan", 3, "2 2"], [563, "orange", 2, "2 2"], [569, "cyan", 3, "2 2"],
    [594, "orange", 4, "2 2"], [633, "purple", 4, "6 4"], [637, "mint", 2], [684, "orange", 2, "2 2"],
    [736, "orange", 2], [775, "orange", 4, "2 2"], [780, "mint", 2], [807, "orange", 2, "2 2"], [878, "orange", 2],
];

function PopoutScreen() {
    return (
        <>
            <BrowserTitle>
                <Logo width={14} height={12} />
                CMC Markets - Google Chrome
                <BrowserControls>
                    <Icon name="minus" size={12} />
                    <Icon name="max" size={13} />
                    <Icon name="close" size={14} />
                </BrowserControls>
            </BrowserTitle>
            <AddressBar>
                <Icon name="lock" size={12} />
                <a href="#/app"><b>platform.cmcmarkets.com</b>/popout.html#/app?r=FR&amp;b=CMC-CFD</a>
            </AddressBar>
            <ChartWindow dark num="4" name="Allemagne 40" border="1px 1px 0 1px" noPlus change={ticketDax} sell="15 481,13" buy="15 485,13" spread="-"
                interval="5 minutes" quick={["10s", "30s", "1m"]} range="8 Jours" ranges={["SLS", "1J", "1S"]} model="J" side="Achat" active={["pencil", "updown", "stretch"]}>
                <Chart height={890} marker={1705} from="#e8e8e8" tone="#fafdfb" axis={72} pad={0}
                    dates={[[569, "31 janv."], [912, "1 févr."], [1258, "2 févr."], [1607, "3 févr."]]}
                    timeExtra={<g><rect x="1730" y="0" width="116" height="13" /><text x="1732" y="11" fill="#fff">3 févr. 2023 21:55:00</text></g>}
                    prices={[[170, "15 600,00"], [359, "15 400,00"], [551, "15 200,00"], [741, "15 000,00"],
                        [31, "15 744,48", "mint"], [85, "15 686,97", "cyan"], [174, "15 595,24", "mint"], [192, "15 576,11", "forest"],
                        [245, "15 520,03", "orange"], [264, "15 500,00", "gray"], [278, "15 485,13", "dark", "big"], [315, "15 446,15", "red", "bar"],
                        [334, "15 426,88", "mint"], [388, "15 370,99", "orange"], [439, "15 316,57", "orange"], [477, "15 277,26", "mint"],
                        [495, "15 258,83", "forest"], [491, "15 263,08", "orange"], [530, "15 220,29", "cyan"], [569, "15 181,49", "cyan"],
                        [563, "15 187,70", "orange"], [593, "15 155,16", "orange"], [632, "15 114,24", "purple"], [638, "15 109,34", "mint"],
                        [684, "15 059,73", "orange"], [735, "15 006,13", "orange"], [774, "14 965,41", "orange"], [780, "14 959,80", "mint"],
                        [806, "14 931,47", "orange"], [877, "14 857,09", "orange"]]}>
                    {LEVELS.map(([y, tone, w, dash]) => <HLine key={y} y={y} color={TAG[tone][0]} w={w} dash={dash} />)}
                    <HLine y={265} x={907} color="#999" w={3} dash="2 2" />
                    <HLine y={279.500} color="#444" />
                    <HLine y={316.500} x={80} color="#e00000" dash="2 2" />
                    <HLine y={335} x={1588} color="#ee82ee" w={2} />
                    <HLine y={335} color="#30f530" w={4} dash="6 5" />
                    <line x1="530" x2="530" y1="0" y2="886" stroke="#00f000" strokeWidth="2" strokeDasharray="5 4" />
                    <text x="0" y="321" fill="#f01818">38,98 / 0,25 %</text>
                    <Series points={DAX5_A} spikes={[641, 1200, 1271, 0, 565, 1150, 1222, 0, 596, 1120, 1240, 0]} map={[1.6165, -11, 1.449, -123]} step={2} vol={9} seed={31} {...tealOrange} />
                    <Series points={DAX5_B} spikes={[1002, 458, 560, 0, 1003, 490, 600, 0, 1015, 600, 700, 0, 398, 950, 1067, 0, 830, 575, 640, 1]} map={[1.6333, 959, 1.449, -123]} step={2} vol={9} seed={13} {...tealOrange} />
                    <Series points={DAX5_C} map={[1.6333, 959, 1.449, -123]} step={2} vol={5} seed={2} {...tealOrange} />
                </Chart>
            </ChartWindow>
            <Taskbar />
        </>
    );
}

const Bar = styled.footer`
    flex: 1;
    min-height: 47px;
    display: flex;
    align-items: center;
    gap: 20px;
    padding: 0 17px 0 600px;
    background: linear-gradient(#e1e1e1, #d8d9d9);
    font-family: "Open Sans", "Noto Sans", sans-serif;
`;

const TaskSearch = styled.button`
    display: flex;
    align-items: center;
    gap: 5px;
    width: 116px;
    height: 32px;
    padding: 0 20px;
    margin: 0 -7px 0 -4px;
    border-radius: 16px;
    background: #f4f4f4;
    color: #333;
    svg { transform: scaleX(-1); }
`;

const TaskIcon = styled.button`
    width: 24px;
    height: 24px;
`;

const TaskClock = styled.div`
    margin-left: auto;
    text-align: right;
    line-height: 16px;
    color: #6c6f72;
`;

const chip = <g><path d="M3 8l8-5 10 9-8 6z" fill="#6f6f6f" /><path d="M3 8l10 10v3L3 11z" fill="#a5a5a5" /></g>;
const putty = <g><rect x="8" y="1" width="14" height="11" fill="#ccd" stroke="#223" /><rect x="10" y="3" width="10" height="7" fill="#1040d0" /><rect x="1" y="10" width="12" height="11" fill="#ccd" stroke="#223" /><rect x="3" y="13" width="8" height="5" fill="#1040d0" /><path d="M16 5l-6 9h5l-5 7" fill="none" stroke="#f5e000" strokeWidth="1.500" /></g>;

const TASKS = {
    "Vue des tâches": <g><rect x="8" y="3" width="14" height="14" fill="#fff" opacity=".9" /><rect x="2" y="7" width="14" height="14" fill="#333" /></g>,
    Explorateur: <g><path d="M1 4h8l2 3h12v14H1z" fill="#f5bf30" /><path d="M5 16h14v5H5z" fill="#1b7fd6" /></g>,
    Paramètres: <g fill="none" stroke="#5b6773"><circle cx="12" cy="12" r="7" strokeWidth="5" /><circle cx="12" cy="12" r="10" strokeWidth="3" strokeDasharray="5 3" /><circle cx="12" cy="12" r="3" fill="#3c8ee0" stroke="#cfe4f7" strokeWidth="1" /></g>,
    Capture: <g fill="none"><rect x="2" y="3" width="12" height="12" stroke="#c33" strokeWidth="2" strokeDasharray="3 2" /><path d="M13 4v13h10M16 21l7-6" stroke="#2a8ad8" strokeWidth="2" /></g>,
    Chrome: <g><circle cx="12" cy="12" r="11" fill="#ea4335" /><path d="M2.500 6.500A11 11 0 0 0 12 23l5-8H7z" fill="#34a853" /><path d="M12 23a11 11 0 0 0 9.500-16.500H12l5 8.500z" fill="#fbbc05" /><circle cx="12" cy="12" r="5" fill="#4285f4" stroke="#fff" strokeWidth="1.500" /></g>,
    TradingView: <g><rect width="24" height="24" fill="#131722" /><path d="M4 8h8v8H8v-4H4zM18 8h4l-4 8h-3z" fill="#fff" /><circle cx="15" cy="10" r="2" fill="#fff" /></g>,
    Vision: <g><path d="M1 12L12 3l11 9-11 9z" fill="#e8731c" /><ellipse cx="12" cy="12" rx="8" ry="5" fill="#fff" /><circle cx="12" cy="12" r="4" fill="#4b8a2c" /><circle cx="12" cy="12" r="2" /></g>,
    "Terminal 1": putty,
    "Puce 1": chip,
    "Puce 2": <path d="M2 12l8-5 12 4-8 6z" fill="#444" />,
    "Terminal 2": putty,
    "Puce 3": chip,
    "Puce 4": <path d="M2 6l7-4 14 13-7 5z" fill="#111" stroke="#b8a800" strokeDasharray="2 2" />,
};

function Taskbar() {
    return (
        <Bar>
            <TaskIcon aria-label="Démarrer">
                <svg width="24" height="24" viewBox="0 0 24 24"><path d="M0 0h11v11H0zM12 0h11v11H12zM0 12h11v11H0zM12 12h11v11H12z" fill="#1590e0" /></svg>
            </TaskIcon>
            <TaskSearch><Icon name="search" size={14} />Recherche</TaskSearch>
            {Object.entries(TASKS).map(([label, art]) => (
                <TaskIcon key={label} aria-label={label}><svg width="24" height="24" viewBox="0 0 24 24">{art}</svg></TaskIcon>
            ))}
            <TaskClock>07:48<br />03/02/2023</TaskClock>
        </Bar>
    );
}

export default function App() {
    return (
        <Screen>
            <GlobalStyle />
            <Column>
                <IndicesScreen />
                <TradeScreen />
            </Column>
            <Column>
                <HomeScreen />
                <PopoutScreen />
            </Column>
        </Screen>
    );
}
